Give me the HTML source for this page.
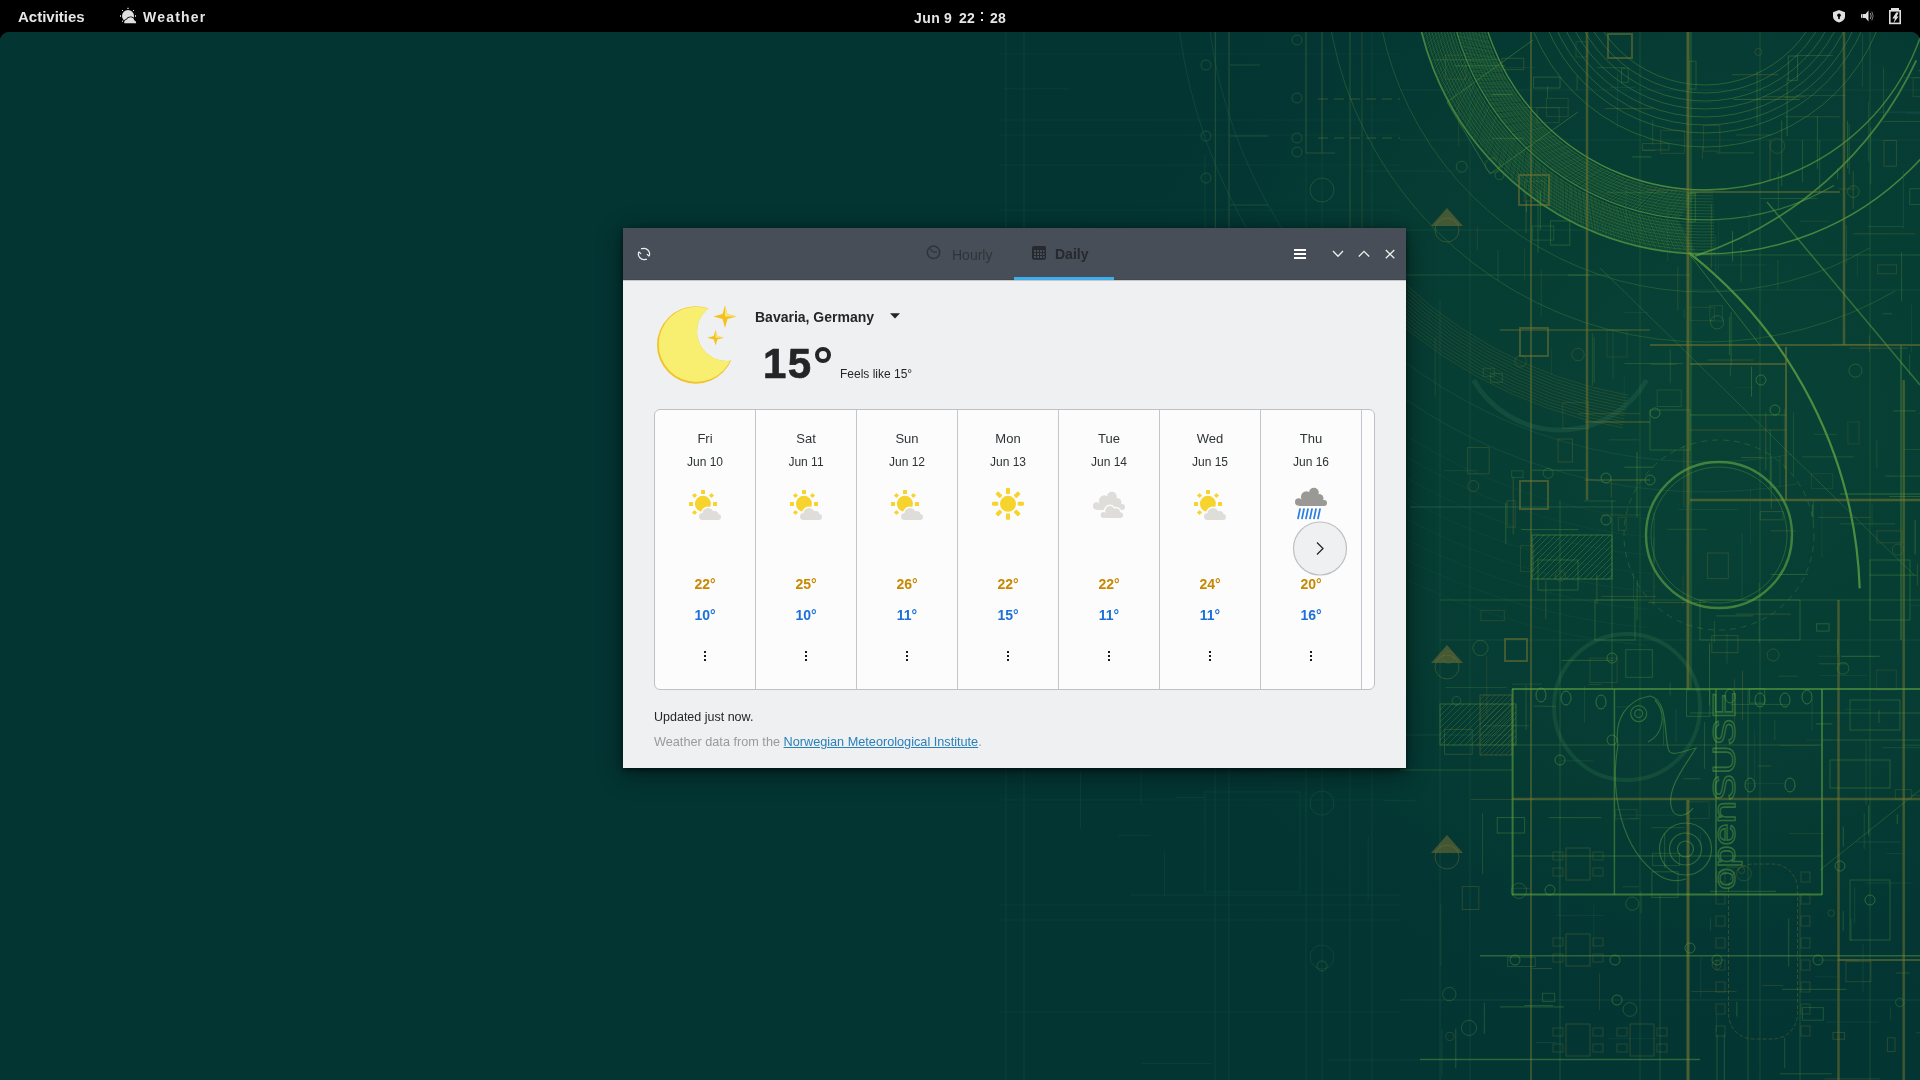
<!DOCTYPE html>
<html><head><meta charset="utf-8">
<style>
html,body{margin:0;padding:0;width:1920px;height:1080px;overflow:hidden;background:#000;font-family:"Liberation Sans",sans-serif;}
.abs{position:absolute;}
#topbar{position:absolute;left:0;top:0;width:1920px;height:32px;background:#000;color:#e6e6e6;font-weight:700;font-size:14px;}
#desk{position:absolute;left:0;top:32px;width:1920px;height:1048px;background:#033533;border-radius:9px 9px 0 0;overflow:hidden;}
#desk svg{position:absolute;left:0;top:0;}
#win{position:absolute;left:623px;top:228px;width:783px;height:540px;background:#eff0f2;box-shadow:0 2px 5px rgba(0,0,0,0.55),0 5px 24px rgba(0,0,0,0.45);}
#hdr{position:absolute;left:0;top:0;width:783px;height:52px;background:#474e57;}
.t{position:absolute;white-space:pre;line-height:1;will-change:transform;}
.frame{position:absolute;left:31px;top:181px;width:719px;height:279px;border:1px solid #c0c1c4;border-radius:6px;background:#fcfcfc;overflow:hidden;}
.sep{position:absolute;top:0;width:1px;height:279px;background:#c4c5c8;}
.day{will-change:transform;position:absolute;font-size:13px;color:#2e3436;text-align:center;width:100px;line-height:1;white-space:pre;}
.date{will-change:transform;position:absolute;font-size:12px;color:#2e3436;text-align:center;width:100px;line-height:1;white-space:pre;}
.hi{will-change:transform;position:absolute;font-size:14px;font-weight:700;color:#c88800;text-align:center;width:100px;line-height:1;}
.lo{will-change:transform;position:absolute;font-size:14px;font-weight:700;color:#1c71d8;text-align:center;width:100px;line-height:1;}
.dot{position:absolute;width:2px;height:2px;background:#1a1a1a;}
.icw{position:absolute;width:719px;height:60px;}
.ic{position:absolute;overflow:visible;}
</style></head><body>
<div id="desk"><svg width="1920" height="1048" viewBox="0 32 1920 1048"><defs><radialGradient id="glow" cx="1720" cy="420" r="700" gradientUnits="userSpaceOnUse"><stop offset="0" stop-color="#0c4b36" stop-opacity="0.6"/><stop offset="0.55" stop-color="#0a4634" stop-opacity="0.4"/><stop offset="1" stop-color="#033533" stop-opacity="0"/></radialGradient></defs><rect x="0" y="32" width="1920" height="1048" fill="#033533"/><rect x="900" y="32" width="1020" height="1048" fill="url(#glow)"/><line x1="1006.0" y1="32.0" x2="1006.0" y2="1080.0" stroke="#2f6e52" stroke-width="1" stroke-opacity="0.22"/><line x1="1024.0" y1="32.0" x2="1024.0" y2="1080.0" stroke="#2f6e52" stroke-width="1" stroke-opacity="0.22"/><line x1="1215.0" y1="32.0" x2="1215.0" y2="1080.0" stroke="#2f6e52" stroke-width="1" stroke-opacity="0.22"/><line x1="1229.0" y1="32.0" x2="1229.0" y2="1080.0" stroke="#2f6e52" stroke-width="1" stroke-opacity="0.22"/><line x1="1306.0" y1="32.0" x2="1306.0" y2="1080.0" stroke="#2f6e52" stroke-width="1" stroke-opacity="0.22"/><line x1="1322.0" y1="32.0" x2="1322.0" y2="1080.0" stroke="#2f6e52" stroke-width="1" stroke-opacity="0.22"/><line x1="1350.0" y1="32.0" x2="1350.0" y2="1080.0" stroke="#2f6e52" stroke-width="1" stroke-opacity="0.22"/><line x1="1372.0" y1="32.0" x2="1372.0" y2="1080.0" stroke="#2f6e52" stroke-width="1" stroke-opacity="0.22"/><line x1="1000.0" y1="54.0" x2="1400.0" y2="54.0" stroke="#2f6e52" stroke-width="1" stroke-opacity="0.15"/><line x1="1000.0" y1="120.0" x2="1400.0" y2="120.0" stroke="#2f6e52" stroke-width="1" stroke-opacity="0.15"/><line x1="1000.0" y1="135.0" x2="1400.0" y2="135.0" stroke="#2f6e52" stroke-width="1" stroke-opacity="0.15"/><line x1="1000.0" y1="165.0" x2="1400.0" y2="165.0" stroke="#2f6e52" stroke-width="1" stroke-opacity="0.15"/><line x1="1000.0" y1="210.0" x2="1400.0" y2="210.0" stroke="#2f6e52" stroke-width="1" stroke-opacity="0.15"/><line x1="1000.0" y1="300.0" x2="1400.0" y2="300.0" stroke="#2f6e52" stroke-width="1" stroke-opacity="0.15"/><line x1="1000.0" y1="380.0" x2="1400.0" y2="380.0" stroke="#2f6e52" stroke-width="1" stroke-opacity="0.15"/><line x1="1000.0" y1="460.0" x2="1400.0" y2="460.0" stroke="#2f6e52" stroke-width="1" stroke-opacity="0.15"/><line x1="1000.0" y1="507.0" x2="1400.0" y2="507.0" stroke="#2f6e52" stroke-width="1" stroke-opacity="0.15"/><line x1="1000.0" y1="560.0" x2="1400.0" y2="560.0" stroke="#2f6e52" stroke-width="1" stroke-opacity="0.15"/><line x1="1000.0" y1="700.0" x2="1400.0" y2="700.0" stroke="#2f6e52" stroke-width="1" stroke-opacity="0.15"/><line x1="1000.0" y1="800.0" x2="1400.0" y2="800.0" stroke="#2f6e52" stroke-width="1" stroke-opacity="0.15"/><line x1="1000.0" y1="905.0" x2="1400.0" y2="905.0" stroke="#2f6e52" stroke-width="1" stroke-opacity="0.15"/><line x1="1000.0" y1="920.0" x2="1400.0" y2="920.0" stroke="#2f6e52" stroke-width="1" stroke-opacity="0.15"/><line x1="1000.0" y1="1012.0" x2="1400.0" y2="1012.0" stroke="#2f6e52" stroke-width="1" stroke-opacity="0.15"/><circle cx="1206" cy="65" r="5" fill="none" stroke="#5b8f3d" stroke-width="1" stroke-opacity="0.3"/><circle cx="1206" cy="136" r="5" fill="none" stroke="#5b8f3d" stroke-width="1" stroke-opacity="0.3"/><circle cx="1206" cy="178" r="5" fill="none" stroke="#5b8f3d" stroke-width="1" stroke-opacity="0.3"/><circle cx="1297" cy="40" r="5" fill="none" stroke="#5b8f3d" stroke-width="1" stroke-opacity="0.3"/><circle cx="1297" cy="98" r="5" fill="none" stroke="#5b8f3d" stroke-width="1" stroke-opacity="0.3"/><circle cx="1297" cy="138" r="5" fill="none" stroke="#5b8f3d" stroke-width="1" stroke-opacity="0.3"/><circle cx="1297" cy="152" r="5" fill="none" stroke="#5b8f3d" stroke-width="1" stroke-opacity="0.3"/><circle cx="1322" cy="966" r="5" fill="none" stroke="#5b8f3d" stroke-width="1" stroke-opacity="0.3"/><circle cx="1322" cy="190" r="12" fill="none" stroke="#5b8f3d" stroke-width="1" stroke-opacity="0.3"/><circle cx="1322" cy="803" r="12" fill="none" stroke="#3e7a48" stroke-width="1" stroke-opacity="0.22"/><circle cx="1322" cy="957" r="12" fill="none" stroke="#3e7a48" stroke-width="1" stroke-opacity="0.22"/><rect x="1205.0" y="792.0" width="95.0" height="100.0" rx="0" fill="none" stroke="#2f6e52" stroke-width="1" stroke-opacity="0.18"/><line x1="1130.0" y1="895.0" x2="1400.0" y2="895.0" stroke="#2f6e52" stroke-width="1" stroke-opacity="0.18"/><path d="M1656.2 519.9 A560 560 0 0 1 1220.0 242.0" fill="none" stroke="#2f6e52" stroke-width="1" stroke-opacity="0.15"/><path d="M1654.6 537.8 A578 578 0 0 1 1204.4 251.0" fill="none" stroke="#2f6e52" stroke-width="1" stroke-opacity="0.15"/><path d="M1653.1 555.7 A596 596 0 0 1 1188.8 260.0" fill="none" stroke="#2f6e52" stroke-width="1" stroke-opacity="0.15"/><path d="M1651.5 573.7 A614 614 0 0 1 1173.3 269.0" fill="none" stroke="#2f6e52" stroke-width="1" stroke-opacity="0.15"/><path d="M1649.9 591.6 A632 632 0 0 1 1157.7 278.0" fill="none" stroke="#2f6e52" stroke-width="1" stroke-opacity="0.15"/><path d="M1648.3 609.5 A650 650 0 0 1 1142.1 287.0" fill="none" stroke="#2f6e52" stroke-width="1" stroke-opacity="0.15"/><path d="M1646.8 627.5 A668 668 0 0 1 1126.5 296.0" fill="none" stroke="#2f6e52" stroke-width="1" stroke-opacity="0.15"/><path d="M1645.2 645.4 A686 686 0 0 1 1110.9 305.0" fill="none" stroke="#2f6e52" stroke-width="1" stroke-opacity="0.15"/><line x1="1306.0" y1="32.0" x2="1306.0" y2="153.0" stroke="#6d7a35" stroke-width="1" stroke-opacity="0.35"/><line x1="1322.0" y1="32.0" x2="1322.0" y2="153.0" stroke="#6d7a35" stroke-width="1" stroke-opacity="0.35"/><line x1="1350.0" y1="32.0" x2="1350.0" y2="230.0" stroke="#6d7a35" stroke-width="1" stroke-opacity="0.3"/><line x1="1362.0" y1="32.0" x2="1362.0" y2="230.0" stroke="#6d7a35" stroke-width="1" stroke-opacity="0.3"/><line x1="1215.6" y1="32.0" x2="1215.6" y2="230.0" stroke="#6d7a35" stroke-width="1" stroke-opacity="0.28"/><line x1="1229.0" y1="32.0" x2="1229.0" y2="230.0" stroke="#6d7a35" stroke-width="1" stroke-opacity="0.28"/><line x1="1306.0" y1="153.0" x2="1335.0" y2="153.0" stroke="#6d7a35" stroke-width="1" stroke-opacity="0.35"/><line x1="1318.0" y1="99.0" x2="1400.0" y2="99.0" stroke="#6d7a35" stroke-width="1.5" stroke-opacity="0.3" stroke-dasharray="10 6"/><line x1="1318.0" y1="138.0" x2="1400.0" y2="138.0" stroke="#6d7a35" stroke-width="1.5" stroke-opacity="0.3" stroke-dasharray="10 6"/><line x1="1230.0" y1="65.0" x2="1260.0" y2="65.0" stroke="#5b8f3d" stroke-width="1" stroke-opacity="0.3"/><line x1="1230.0" y1="136.0" x2="1268.0" y2="136.0" stroke="#5b8f3d" stroke-width="1" stroke-opacity="0.3"/><line x1="1230.0" y1="205.0" x2="1268.0" y2="205.0" stroke="#5b8f3d" stroke-width="1" stroke-opacity="0.3"/><path d="M1828.0 -38.0 A123 123 0 0 1 1582.0 -38.0" fill="none" stroke="#5ea33f" stroke-width="0.9" stroke-opacity="0.42"/><path d="M1836.0 -38.0 A131 131 0 0 1 1574.0 -38.0" fill="none" stroke="#5ea33f" stroke-width="0.9" stroke-opacity="0.42"/><path d="M1844.0 -38.0 A139 139 0 0 1 1566.0 -38.0" fill="none" stroke="#5ea33f" stroke-width="0.9" stroke-opacity="0.42"/><path d="M1852.0 -38.0 A147 147 0 0 1 1558.0 -38.0" fill="none" stroke="#5ea33f" stroke-width="0.9" stroke-opacity="0.42"/><path d="M1860.0 -38.0 A155 155 0 0 1 1550.0 -38.0" fill="none" stroke="#5ea33f" stroke-width="0.9" stroke-opacity="0.42"/><path d="M1868.0 -38.0 A163 163 0 0 1 1542.0 -38.0" fill="none" stroke="#5ea33f" stroke-width="0.9" stroke-opacity="0.42"/><path d="M1876.0 -38.0 A171 171 0 0 1 1534.0 -38.0" fill="none" stroke="#5ea33f" stroke-width="0.9" stroke-opacity="0.42"/><path d="M1890.0 -38.0 A185 185 0 0 1 1520.0 -38.0" fill="none" stroke="#5ea33f" stroke-width="0.9" stroke-opacity="0.42"/><path d="M1713.0 189.9 A228 228 0 0 1 1477.1 -30.0" fill="none" stroke="#6aab44" stroke-width="0.8" stroke-opacity="0.3"/><path d="M1713.1 192.9 A231 231 0 0 1 1474.1 -29.9" fill="none" stroke="#6aab44" stroke-width="0.8" stroke-opacity="0.3"/><path d="M1713.2 195.9 A234 234 0 0 1 1471.1 -29.8" fill="none" stroke="#6aab44" stroke-width="0.8" stroke-opacity="0.3"/><path d="M1713.3 198.9 A237 237 0 0 1 1468.1 -29.7" fill="none" stroke="#6aab44" stroke-width="0.8" stroke-opacity="0.3"/><path d="M1713.4 201.9 A240 240 0 0 1 1465.1 -29.6" fill="none" stroke="#6aab44" stroke-width="0.8" stroke-opacity="0.3"/><path d="M1713.5 204.9 A243 243 0 0 1 1462.1 -29.5" fill="none" stroke="#6aab44" stroke-width="0.8" stroke-opacity="0.3"/><path d="M1713.6 207.9 A246 246 0 0 1 1459.1 -29.4" fill="none" stroke="#6aab44" stroke-width="0.8" stroke-opacity="0.3"/><path d="M1713.7 210.8 A249 249 0 0 1 1456.2 -29.3" fill="none" stroke="#6aab44" stroke-width="0.8" stroke-opacity="0.3"/><path d="M1713.8 213.8 A252 252 0 0 1 1453.2 -29.2" fill="none" stroke="#6aab44" stroke-width="0.8" stroke-opacity="0.3"/><path d="M1713.9 216.8 A255 255 0 0 1 1450.2 -29.1" fill="none" stroke="#6aab44" stroke-width="0.8" stroke-opacity="0.3"/><path d="M1714.0 219.8 A258 258 0 0 1 1447.2 -29.0" fill="none" stroke="#6aab44" stroke-width="0.8" stroke-opacity="0.3"/><path d="M1714.1 222.8 A261 261 0 0 1 1444.2 -28.9" fill="none" stroke="#6aab44" stroke-width="0.8" stroke-opacity="0.3"/><path d="M1714.2 225.8 A264 264 0 0 1 1441.2 -28.8" fill="none" stroke="#6aab44" stroke-width="0.8" stroke-opacity="0.3"/><path d="M1714.3 228.8 A267 267 0 0 1 1438.2 -28.7" fill="none" stroke="#6aab44" stroke-width="0.8" stroke-opacity="0.3"/><path d="M1714.4 231.8 A270 270 0 0 1 1435.2 -28.6" fill="none" stroke="#6aab44" stroke-width="0.8" stroke-opacity="0.3"/><path d="M1714.5 234.8 A273 273 0 0 1 1432.2 -28.5" fill="none" stroke="#6aab44" stroke-width="0.8" stroke-opacity="0.3"/><path d="M1714.6 237.8 A276 276 0 0 1 1429.2 -28.4" fill="none" stroke="#6aab44" stroke-width="0.8" stroke-opacity="0.3"/><path d="M1714.7 240.8 A279 279 0 0 1 1426.2 -28.3" fill="none" stroke="#6aab44" stroke-width="0.8" stroke-opacity="0.3"/><path d="M1714.8 243.8 A282 282 0 0 1 1423.2 -28.2" fill="none" stroke="#6aab44" stroke-width="0.8" stroke-opacity="0.3"/><path d="M1714.9 246.8 A285 285 0 0 1 1420.2 -28.1" fill="none" stroke="#6aab44" stroke-width="0.8" stroke-opacity="0.3"/><path d="M1715.1 249.8 A288 288 0 0 1 1417.2 -27.9" fill="none" stroke="#6aab44" stroke-width="0.8" stroke-opacity="0.3"/><path d="M1715.2 252.8 A291 291 0 0 1 1414.2 -27.8" fill="none" stroke="#6aab44" stroke-width="0.8" stroke-opacity="0.3"/><path d="M1933.0 -38.0 A228 228 0 0 1 1477.0 -38.0" fill="none" stroke="#6aab44" stroke-width="1.4" stroke-opacity="0.6"/><path d="M1997.0 -38.0 A292 292 0 0 1 1413.0 -38.0" fill="none" stroke="#6aab44" stroke-width="1.6" stroke-opacity="0.65"/><path d="M1834.0 185.4 A258 258 0 0 1 1447.2 -29.0" fill="none" stroke="#6aab44" stroke-width="1.2" stroke-opacity="0.5"/><path d="M1697 192L1678 219M1678 221L1695 252M1696 192L1677 218M1676 220L1693 252M1694 192L1675 218M1675 220L1692 252M1693 192L1674 218M1673 220L1690 252M1692 192L1672 218M1672 220L1688 252M1690 192L1671 218M1670 220L1686 251M1689 191L1669 217M1669 219L1685 251M1688 191L1668 217M1667 219L1683 251M1686 191L1666 217M1666 219L1681 251M1685 191L1665 217M1664 219L1680 251M1684 191L1663 217M1663 219L1678 251M1682 191L1662 216M1661 218L1676 251M1681 191L1660 216M1660 218L1675 250M1680 191L1659 216M1658 218L1673 250M1678 190L1657 216M1657 218L1671 250M1677 190L1656 215M1655 217L1670 250M1676 190L1654 215M1654 217L1668 250M1674 190L1653 215M1652 217L1666 249M1673 190L1651 214M1651 216L1665 249M1672 190L1650 214M1649 216L1663 249M1670 189L1648 214M1648 216L1661 249M1669 189L1647 213M1647 215L1660 248M1668 189L1646 213M1645 215L1658 248M1666 189L1644 213M1644 215L1656 248M1665 189L1643 212M1642 214L1655 248M1664 188L1641 212M1641 214L1653 247M1662 188L1640 212M1639 214L1651 247M1661 188L1638 211M1638 213L1650 247M1660 188L1637 211M1636 213L1648 246M1658 187L1635 210M1635 212L1646 246M1657 187L1634 210M1633 212L1645 246M1656 187L1632 210M1632 212L1643 245M1655 186L1631 209M1630 211L1641 245M1653 186L1630 209M1629 211L1640 245M1652 186L1628 208M1628 210L1638 244M1651 185L1627 208M1626 210L1636 244M1649 185L1625 207M1625 209L1635 243M1648 185L1624 207M1623 209L1633 243M1647 185L1622 206M1622 208L1632 243M1645 184L1621 206M1620 208L1630 242M1644 184L1620 205M1619 207L1628 242M1643 183L1618 205M1617 207L1627 241M1642 183L1617 204M1616 206L1625 241M1640 183L1615 204M1615 206L1623 240M1639 182L1614 203M1613 205L1622 240M1638 182L1613 203M1612 205L1620 239M1636 182L1611 202M1610 204L1619 239M1635 181L1610 202M1609 204L1617 238M1634 181L1608 201M1608 203L1615 238M1633 180L1607 201M1606 202L1614 237M1631 180L1606 200M1605 202L1612 237M1630 179L1604 199M1603 201L1611 236M1629 179L1603 199M1602 201L1609 236M1628 179L1601 198M1601 200L1607 235M1626 178L1600 198M1599 200L1606 235M1625 178L1599 197M1598 199L1604 234M1624 177L1597 196M1596 198L1603 233M1623 177L1596 196M1595 198L1601 233M1621 176L1595 195M1594 197L1599 232M1620 176L1593 195M1592 196L1598 232M1619 175L1592 194M1591 196L1596 231M1618 175L1591 193M1590 195L1595 230M1616 174L1589 193M1588 194L1593 230M1615 174L1588 192M1587 194L1592 229M1614 173L1587 191M1586 193L1590 228M1613 173L1585 191M1584 192L1589 228M1611 172L1584 190M1583 192L1587 227M1610 172L1583 189M1582 191L1586 226M1609 171L1581 188M1580 190L1584 226M1608 170L1580 188M1579 189L1582 225M1607 170L1579 187M1578 189L1581 224M1605 169L1577 186M1576 188L1579 223M1604 169L1576 185M1575 187L1578 223M1603 168L1575 185M1574 186L1576 222M1602 168L1573 184M1572 186L1575 221M1601 167L1572 183M1571 185L1573 220M1599 166L1571 182M1570 184L1572 220M1598 166L1570 182M1569 183L1570 219M1597 165L1568 181M1567 182L1569 218M1596 164L1567 180M1566 182L1567 217M1595 164L1566 179M1565 181L1566 216M1593 163L1564 178M1563 180L1564 216M1592 163L1563 178M1562 179L1563 215M1591 162L1562 177M1561 178L1561 214M1590 161L1561 176M1560 178L1560 213M1589 161L1559 175M1558 177L1559 212M1588 160L1558 174M1557 176L1557 211M1587 159L1557 173M1556 175L1556 211M1585 158L1556 172M1555 174L1554 210M1584 158L1555 172M1553 173L1553 209M1583 157L1553 171M1552 172L1551 208M1582 156L1552 170M1551 171L1550 207M1581 156L1551 169M1550 171L1548 206M1580 155L1550 168M1549 170L1547 205M1579 154L1549 167M1547 169L1546 204M1577 153L1547 166M1546 168L1544 203M1576 153L1546 165M1545 167L1543 202M1575 152L1545 164M1544 166L1541 201M1574 151L1544 163M1543 165L1540 201M1573 150L1543 163M1541 164L1539 200M1572 150L1541 162M1540 163L1537 199M1571 149L1540 161M1539 162L1536 198M1570 148L1539 160M1538 161L1535 197M1569 147L1538 159M1537 160L1533 196M1568 146L1537 158M1536 159L1532 195M1567 146L1536 157M1534 158L1530 194M1566 145L1535 156M1533 157L1529 193M1564 144L1533 155M1532 156L1528 192M1563 143L1532 154M1531 155L1526 191M1562 142L1531 153M1530 154L1525 189M1561 142L1530 152M1529 153L1524 188M1560 141L1529 151M1528 152L1522 187M1559 140L1528 150M1527 151L1521 186M1558 139L1527 149M1525 150L1520 185M1557 138L1526 148M1524 149L1519 184M1556 137L1525 147M1523 148L1517 183M1555 136L1524 145M1522 147L1516 182M1554 136L1523 144M1521 146L1515 181M1553 135L1522 143M1520 145L1513 180M1552 134L1520 142M1519 144L1512 179M1551 133L1519 141M1518 143L1511 178M1550 132L1518 140M1517 142L1510 176M1549 131L1517 139M1516 140L1508 175M1548 130L1516 138M1515 139L1507 174M1547 129L1515 137M1514 138L1506 173M1546 128L1514 136M1513 137L1505 172M1545 127L1513 135M1512 136L1504 171M1544 127L1512 134M1511 135L1502 169M1543 126L1511 132M1510 134L1501 168M1542 125L1510 131M1509 133L1500 167M1541 124L1509 130M1508 131L1499 166M1540 123L1508 129M1507 130L1498 165M1540 122L1507 128M1506 129L1496 163M1539 121L1506 127M1505 128L1495 162M1538 120L1505 126M1504 127L1494 161M1537 119L1504 124M1503 126L1493 160M1536 118L1504 123M1502 124L1492 159M1535 117L1503 122M1501 123L1491 157M1534 116L1502 121M1500 122L1489 156M1533 115L1501 120M1499 121L1488 155M1532 114L1500 118M1498 120L1487 154M1531 113L1499 117M1497 118L1486 152M1531 112L1498 116M1496 117L1485 151M1530 111L1497 115M1496 116L1484 150M1529 110L1496 114M1495 115L1483 148M1528 109L1495 112M1494 114L1482 147M1527 108L1495 111M1493 112L1481 146M1526 107L1494 110M1492 111L1480 145M1525 106L1493 109M1491 110L1479 143M1525 105L1492 108M1490 109L1478 142M1524 104L1491 106M1489 107L1476 141M1523 103L1490 105M1489 106L1475 139M1522 101L1489 104M1488 105L1474 138M1521 100L1489 103M1487 104L1473 137M1521 99L1488 101M1486 102L1472 135M1520 98L1487 100M1485 101L1471 134M1519 97L1486 99M1485 100L1470 132M1518 96L1485 97M1484 98L1469 131M1517 95L1485 96M1483 97L1468 130M1517 94L1484 95M1482 96L1467 128M1516 93L1483 94M1481 95L1466 127M1515 92L1482 92M1481 93L1466 126M1514 91L1482 91M1480 92L1465 124M1514 90L1481 90M1479 91L1464 123M1513 88L1480 88M1478 89L1463 121M1512 87L1479 87M1478 88L1462 120M1511 86L1479 86M1477 87L1461 119M1511 85L1478 84M1476 85L1460 117M1510 84L1477 83M1475 84L1459 116M1509 83L1476 82M1475 83L1458 114M1509 82L1476 80M1474 81L1457 113M1508 80L1475 79M1473 80L1456 111M1507 79L1474 78M1473 79L1456 110M1506 78L1474 76M1472 77L1455 108M1506 77L1473 75M1471 76L1454 107M1505 76L1472 74M1471 75L1453 106M1504 75L1472 72M1470 73L1452 104M1504 74L1471 71M1469 72L1451 103M1503 72L1471 70M1469 71L1451 101M1503 71L1470 68M1468 69L1450 100M1502 70L1469 67M1467 68L1449 98M1501 69L1469 66M1467 66L1448 97M1501 68L1468 64M1466 65L1447 95M1500 66L1468 63M1466 64L1447 94M1499 65L1467 61M1465 62L1446 92M1499 64L1466 60M1465 61L1445 91M1498 63L1466 59M1464 59L1444 89M1498 62L1465 57M1463 58L1444 88M1497 60L1465 56M1463 57L1443 86M1497 59L1464 54M1462 55L1442 85M1496 58L1464 53M1462 54L1441 83M1495 57L1463 52M1461 52L1441 81M1495 56L1463 50M1461 51L1440 80M1494 54L1462 49M1460 50L1439 78M1494 53L1462 47M1460 48L1439 77M1493 52L1461 46M1459 47L1438 75M1493 51L1461 45M1459 45L1437 74M1492 49L1460 43M1458 44L1437 72M1492 48L1460 42M1458 42L1436 71M1491 47L1459 40M1457 41L1435 69M1491 46L1459 39M1457 39L1435 68M1490 44L1458 37M1456 38L1434 66M1490 43L1458 36M1456 37L1434 64M1489 42L1457 35M1455 35L1433 63M1489 41L1457 33M1455 34L1432 61M1488 39L1457 32M1455 32L1432 60M1488 38L1456 30M1454 31L1431 58M1488 37L1456 29M1454 29L1431 56M1487 36L1455 27M1453 28L1430 55M1487 34L1455 26M1453 26L1430 53M1486 33L1455 24M1453 25L1429 52M1486 32L1454 23M1452 23L1429 50M1485 31L1454 21M1452 22L1428 48M1485 29L1454 20M1452 20L1428 47M1485 28L1453 19M1451 19L1427 45M1484 27L1453 17M1451 18L1427 44M1484 25L1453 16M1451 16L1426 42M1484 24L1452 14M1450 15L1426 40M1483 23L1452 13M1450 13L1425 39M1483 22L1452 11M1450 12L1425 37M1482 20L1451 10M1449 10L1424 35M1482 19L1451 8M1449 9L1424 34M1482 18L1451 7M1449 7L1424 32M1482 16L1451 5M1449 6L1423 31M1481 15L1450 4M1448 4L1423 29M1481 14L1450 2M1448 3L1422 27M1481 12L1450 1M1448 1L1422 26M1480 11L1450 -1M1448 -0L1422 24M1480 10L1450 -2M1448 -2L1421 22M1480 9L1449 -4M1447 -3L1421 21M1479 7L1449 -5M1447 -5L1421 19M1479 6L1449 -7M1447 -6L1420 17M1479 5L1449 -8M1447 -8L1420 16M1479 3L1449 -10M1447 -9L1420 14M1478 2L1448 -11M1446 -11L1419 12M1478 1L1448 -13M1446 -12L1419 11M1478 -1L1448 -14M1446 -14L1419 9M1478 -2L1448 -16M1446 -15L1419 7M1478 -3L1448 -17M1446 -17L1418 6M1477 -5L1448 -19M1446 -18L1418 4M1477 -6L1448 -20M1446 -20L1418 2M1477 -7L1448 -22M1446 -21L1418 1M1477 -9L1447 -23M1445 -23L1417 -1M1477 -10L1447 -24M1445 -24L1417 -3M1477 -11L1447 -26M1445 -26L1417 -4M1476 -13L1447 -27M1445 -27L1417 -6M1476 -14L1447 -29M1445 -29L1417 -8M1476 -15L1447 -30M1445 -30L1416 -9M1476 -17L1447 -32M1445 -32L1416 -11M1476 -18L1447 -33M1445 -33L1416 -13M1476 -19L1447 -35M1445 -35L1416 -14M1476 -21L1447 -36M1445 -36L1416 -16M1476 -22L1447 -38M1445 -38L1416 -18M1475 -23L1447 -40M1445 -40L1416 -19M1475 -25L1447 -41M1445 -41L1415 -21M1475 -26L1447 -43M1445 -43L1415 -23M1475 -27L1447 -44M1445 -44L1415 -25M1475 -29L1447 -46M1445 -46L1415 -26" stroke="#6aab44" stroke-width="0.6" stroke-opacity="0.3" fill="none"/><path d="M1870.0 247.8 A330 330 0 0 1 1375.0 -38.0" fill="none" stroke="#5ea33f" stroke-width="1" stroke-opacity="0.28"/><path d="M1895.0 291.1 A380 380 0 0 1 1325.0 -38.0" fill="none" stroke="#5ea33f" stroke-width="1" stroke-opacity="0.28"/><path d="M1628.6 395.3 A440 440 0 0 1 1378.0 256.4" fill="none" stroke="#7b7830" stroke-width="0.8" stroke-opacity="0.3"/><path d="M1628.1 398.3 A443 443 0 0 1 1375.8 258.4" fill="none" stroke="#7b7830" stroke-width="0.8" stroke-opacity="0.3"/><path d="M1627.6 401.2 A446 446 0 0 1 1373.6 260.4" fill="none" stroke="#7b7830" stroke-width="0.8" stroke-opacity="0.3"/><path d="M1627.0 404.2 A449 449 0 0 1 1371.3 262.4" fill="none" stroke="#7b7830" stroke-width="0.8" stroke-opacity="0.3"/><path d="M1626.5 407.1 A452 452 0 0 1 1369.1 264.4" fill="none" stroke="#7b7830" stroke-width="0.8" stroke-opacity="0.3"/><path d="M1626.0 410.1 A455 455 0 0 1 1366.9 266.5" fill="none" stroke="#7b7830" stroke-width="0.8" stroke-opacity="0.3"/><path d="M1625.5 413.0 A458 458 0 0 1 1364.6 268.5" fill="none" stroke="#7b7830" stroke-width="0.8" stroke-opacity="0.3"/><path d="M1624.9 416.0 A461 461 0 0 1 1362.4 270.5" fill="none" stroke="#7b7830" stroke-width="0.8" stroke-opacity="0.3"/><path d="M1624.4 419.0 A464 464 0 0 1 1360.2 272.5" fill="none" stroke="#7b7830" stroke-width="0.8" stroke-opacity="0.3"/><path d="M1623.9 421.9 A467 467 0 0 1 1358.0 274.5" fill="none" stroke="#7b7830" stroke-width="0.8" stroke-opacity="0.3"/><path d="M1623.4 424.9 A470 470 0 0 1 1355.7 276.5" fill="none" stroke="#7b7830" stroke-width="0.8" stroke-opacity="0.3"/><path d="M1622.9 427.8 A473 473 0 0 1 1353.5 278.5" fill="none" stroke="#7b7830" stroke-width="0.8" stroke-opacity="0.3"/><path d="M1791.8 454.4 A500 500 0 0 1 1206.9 5.6" fill="none" stroke="#2f6e52" stroke-width="1" stroke-opacity="0.3"/><path d="M1797.0 483.9 A530 530 0 0 1 1177.0 8.2" fill="none" stroke="#2f6e52" stroke-width="1" stroke-opacity="0.3"/><path d="M1688.6 252.5 A446 446 0 0 1 1859.7 588.4" fill="none" stroke="#6aae46" stroke-width="2.2" stroke-opacity="0.7"/><path d="M1916.3 60.4 A370 370 0 0 1 1695.3 255.9" fill="none" stroke="#6aae46" stroke-width="1.8" stroke-opacity="0.6"/><path d="M1646.6 380.0 A100 100 0 0 1 1473.4 380.0" fill="none" stroke="#2f6e52" stroke-width="5" stroke-opacity="0.3"/><circle cx="1627" cy="707" r="73" fill="none" stroke="#3f8a50" stroke-width="4" stroke-opacity="0.22"/><line x1="1688.0" y1="32.0" x2="1688.0" y2="689.0" stroke="#7b7830" stroke-width="3" stroke-opacity="0.6"/><line x1="1691.0" y1="32.0" x2="1691.0" y2="689.0" stroke="#5ea33f" stroke-width="1" stroke-opacity="0.4"/><line x1="1688.0" y1="800.0" x2="1688.0" y2="1080.0" stroke="#7b7830" stroke-width="3" stroke-opacity="0.6"/><line x1="1844.0" y1="32.0" x2="1844.0" y2="345.0" stroke="#7b7830" stroke-width="2.5" stroke-opacity="0.5"/><line x1="1903.7" y1="380.0" x2="1903.7" y2="1080.0" stroke="#7b7830" stroke-width="2.5" stroke-opacity="0.5"/><line x1="1786.0" y1="347.0" x2="1786.0" y2="500.0" stroke="#7b7830" stroke-width="2" stroke-opacity="0.55"/><line x1="1587.0" y1="32.0" x2="1587.0" y2="500.0" stroke="#7b7830" stroke-width="2.5" stroke-opacity="0.5"/><line x1="1531.0" y1="32.0" x2="1531.0" y2="1080.0" stroke="#7b7830" stroke-width="2" stroke-opacity="0.45"/><line x1="1512.6" y1="689.0" x2="1512.6" y2="895.0" stroke="#5ea33f" stroke-width="2" stroke-opacity="0.6"/><line x1="1614.4" y1="689.0" x2="1614.4" y2="895.0" stroke="#5ea33f" stroke-width="1.5" stroke-opacity="0.5"/><line x1="1716.0" y1="689.0" x2="1716.0" y2="895.0" stroke="#5ea33f" stroke-width="1.5" stroke-opacity="0.5"/><line x1="1822.0" y1="689.0" x2="1822.0" y2="895.0" stroke="#5ea33f" stroke-width="2" stroke-opacity="0.55"/><line x1="1838.5" y1="600.0" x2="1838.5" y2="1080.0" stroke="#7b7830" stroke-width="2.5" stroke-opacity="0.5"/><line x1="1440.0" y1="300.0" x2="1440.0" y2="1080.0" stroke="#2f6e52" stroke-width="1" stroke-opacity="0.3"/><line x1="1470.0" y1="32.0" x2="1470.0" y2="1080.0" stroke="#2f6e52" stroke-width="1" stroke-opacity="0.25"/><line x1="1760.0" y1="32.0" x2="1760.0" y2="1080.0" stroke="#5ea33f" stroke-width="1" stroke-opacity="0.22"/><line x1="1870.0" y1="32.0" x2="1870.0" y2="1080.0" stroke="#5ea33f" stroke-width="1" stroke-opacity="0.22"/><line x1="1640.0" y1="32.0" x2="1640.0" y2="1080.0" stroke="#5ea33f" stroke-width="1" stroke-opacity="0.2"/><line x1="1748.0" y1="689.0" x2="1748.0" y2="1080.0" stroke="#5ea33f" stroke-width="1" stroke-opacity="0.3"/><line x1="1560.0" y1="500.0" x2="1560.0" y2="1080.0" stroke="#5ea33f" stroke-width="1" stroke-opacity="0.28"/><line x1="1901.0" y1="345.0" x2="1901.0" y2="640.0" stroke="#5ea33f" stroke-width="1.5" stroke-opacity="0.4"/><line x1="1612.0" y1="500.0" x2="1612.0" y2="689.0" stroke="#5ea33f" stroke-width="1" stroke-opacity="0.3"/><line x1="1660.0" y1="895.0" x2="1660.0" y2="1080.0" stroke="#5ea33f" stroke-width="1" stroke-opacity="0.3"/><line x1="1800.0" y1="895.0" x2="1800.0" y2="1080.0" stroke="#5ea33f" stroke-width="1" stroke-opacity="0.3"/><line x1="1650.0" y1="345.0" x2="1920.0" y2="345.0" stroke="#7b7830" stroke-width="2" stroke-opacity="0.5"/><line x1="1690.0" y1="364.0" x2="1786.0" y2="364.0" stroke="#7b7830" stroke-width="2" stroke-opacity="0.5"/><line x1="1690.0" y1="415.0" x2="1786.0" y2="415.0" stroke="#5ea33f" stroke-width="1" stroke-opacity="0.4"/><line x1="1690.0" y1="430.0" x2="1786.0" y2="430.0" stroke="#7b7830" stroke-width="1" stroke-opacity="0.4"/><line x1="1690.0" y1="500.0" x2="1920.0" y2="500.0" stroke="#7b7830" stroke-width="2.5" stroke-opacity="0.55"/><line x1="1840.0" y1="494.0" x2="1920.0" y2="494.0" stroke="#5ea33f" stroke-width="1" stroke-opacity="0.45"/><line x1="1690.0" y1="192.0" x2="1840.0" y2="192.0" stroke="#7b7830" stroke-width="2" stroke-opacity="0.45"/><line x1="1500.0" y1="330.0" x2="1650.0" y2="330.0" stroke="#7b7830" stroke-width="1.5" stroke-opacity="0.45"/><line x1="1585.0" y1="422.0" x2="1650.0" y2="422.0" stroke="#7b7830" stroke-width="1.5" stroke-opacity="0.45"/><line x1="1585.0" y1="480.0" x2="1650.0" y2="480.0" stroke="#7b7830" stroke-width="1.5" stroke-opacity="0.45"/><line x1="1410.0" y1="507.0" x2="1650.0" y2="507.0" stroke="#2f6e52" stroke-width="1.5" stroke-opacity="0.4"/><line x1="1512.0" y1="689.0" x2="1920.0" y2="689.0" stroke="#5ea33f" stroke-width="2" stroke-opacity="0.6"/><line x1="1512.0" y1="894.6" x2="1822.0" y2="894.6" stroke="#5ea33f" stroke-width="2" stroke-opacity="0.6"/><line x1="1512.0" y1="856.0" x2="1822.0" y2="856.0" stroke="#5ea33f" stroke-width="1" stroke-opacity="0.4"/><line x1="1512.0" y1="799.0" x2="1920.0" y2="799.0" stroke="#7b7830" stroke-width="2.5" stroke-opacity="0.5"/><line x1="1480.0" y1="955.7" x2="1920.0" y2="955.7" stroke="#5ea33f" stroke-width="1.5" stroke-opacity="0.45"/><line x1="1420.0" y1="1059.6" x2="1700.0" y2="1059.6" stroke="#5ea33f" stroke-width="1.5" stroke-opacity="0.45"/><line x1="1440.0" y1="600.0" x2="1920.0" y2="600.0" stroke="#5ea33f" stroke-width="1" stroke-opacity="0.28"/><line x1="1440.0" y1="640.0" x2="1920.0" y2="640.0" stroke="#2f6e52" stroke-width="1" stroke-opacity="0.3"/><line x1="1400.0" y1="770.0" x2="1512.0" y2="770.0" stroke="#5ea33f" stroke-width="1" stroke-opacity="0.3"/><line x1="1400.0" y1="735.0" x2="1512.0" y2="735.0" stroke="#2f6e52" stroke-width="1" stroke-opacity="0.3"/><line x1="1690.0" y1="713.0" x2="1920.0" y2="713.0" stroke="#5ea33f" stroke-width="1" stroke-opacity="0.33"/><line x1="1838.0" y1="960.0" x2="1920.0" y2="960.0" stroke="#7b7830" stroke-width="2" stroke-opacity="0.5"/><line x1="1400.0" y1="275.0" x2="1690.0" y2="275.0" stroke="#5ea33f" stroke-width="1" stroke-opacity="0.28"/><line x1="1400.0" y1="230.0" x2="1690.0" y2="230.0" stroke="#2f6e52" stroke-width="1" stroke-opacity="0.28"/><line x1="1690.0" y1="255.0" x2="1920.0" y2="255.0" stroke="#5ea33f" stroke-width="1" stroke-opacity="0.28"/><line x1="1690.0" y1="290.0" x2="1920.0" y2="290.0" stroke="#2f6e52" stroke-width="1" stroke-opacity="0.28"/><line x1="1400.0" y1="140.0" x2="1920.0" y2="140.0" stroke="#2f6e52" stroke-width="1" stroke-opacity="0.22"/><line x1="1400.0" y1="90.0" x2="1920.0" y2="90.0" stroke="#2f6e52" stroke-width="1" stroke-opacity="0.22"/><line x1="1512.0" y1="745.0" x2="1822.0" y2="745.0" stroke="#5ea33f" stroke-width="1" stroke-opacity="0.3"/><line x1="1822.0" y1="740.0" x2="1920.0" y2="740.0" stroke="#5ea33f" stroke-width="1" stroke-opacity="0.3"/><line x1="1400.0" y1="1000.0" x2="1920.0" y2="1000.0" stroke="#2f6e52" stroke-width="1" stroke-opacity="0.3"/><line x1="1767.0" y1="202.0" x2="1920.0" y2="385.0" stroke="#5ea33f" stroke-width="1.5" stroke-opacity="0.5"/><line x1="1690.0" y1="255.0" x2="1760.0" y2="345.0" stroke="#5ea33f" stroke-width="1" stroke-opacity="0.45"/><line x1="1600.0" y1="268.0" x2="1914.0" y2="575.0" stroke="#5ea33f" stroke-width="1" stroke-opacity="0.28"/><line x1="1447.0" y1="102.0" x2="1533.0" y2="40.0" stroke="#5ea33f" stroke-width="1" stroke-opacity="0.4"/><line x1="1447.0" y1="102.0" x2="1490.0" y2="174.0" stroke="#5ea33f" stroke-width="1" stroke-opacity="0.4"/><line x1="1490.0" y1="174.0" x2="1578.0" y2="112.0" stroke="#5ea33f" stroke-width="1" stroke-opacity="0.4"/><line x1="1820.0" y1="870.0" x2="1920.0" y2="790.0" stroke="#5ea33f" stroke-width="1" stroke-opacity="0.3"/><circle cx="1719" cy="535" r="73" fill="none" stroke="#68ac45" stroke-width="2.4" stroke-opacity="0.6"/><circle cx="1719" cy="535" r="68" fill="none" stroke="#5ea33f" stroke-width="1" stroke-opacity="0.35"/><circle cx="1719" cy="535" r="95" fill="none" stroke="#5ea33f" stroke-width="1" stroke-opacity="0.28" stroke-dasharray="6 5"/><rect x="1520.0" y="328.0" width="28.0" height="28.0" rx="0" fill="none" stroke="#7b7830" stroke-width="2" stroke-opacity="0.5"/><rect x="1520.0" y="481.0" width="28.0" height="28.0" rx="0" fill="none" stroke="#7b7830" stroke-width="2" stroke-opacity="0.5"/><rect x="1519.0" y="175.0" width="30.0" height="30.0" rx="0" fill="none" stroke="#7b7830" stroke-width="2" stroke-opacity="0.5"/><rect x="1505.0" y="639.0" width="22.0" height="22.0" rx="0" fill="none" stroke="#7b7830" stroke-width="2" stroke-opacity="0.5"/><rect x="1608.0" y="34.0" width="24.0" height="24.0" rx="0" fill="none" stroke="#7b7830" stroke-width="2" stroke-opacity="0.5"/><clipPath id="hc1"><rect x="1440" y="704" width="76" height="41"/></clipPath><rect x="1440.0" y="704.0" width="76.0" height="41.0" rx="0" fill="none" stroke="#5ea33f" stroke-width="1" stroke-opacity="0.44999999999999996"/><g clip-path="url(#hc1)"><line x1="1440.0" y1="704.0" x2="1399.0" y2="745.0" stroke="#5ea33f" stroke-width="0.8" stroke-opacity="0.35"/><line x1="1446.0" y1="704.0" x2="1405.0" y2="745.0" stroke="#5ea33f" stroke-width="0.8" stroke-opacity="0.35"/><line x1="1452.0" y1="704.0" x2="1411.0" y2="745.0" stroke="#5ea33f" stroke-width="0.8" stroke-opacity="0.35"/><line x1="1458.0" y1="704.0" x2="1417.0" y2="745.0" stroke="#5ea33f" stroke-width="0.8" stroke-opacity="0.35"/><line x1="1464.0" y1="704.0" x2="1423.0" y2="745.0" stroke="#5ea33f" stroke-width="0.8" stroke-opacity="0.35"/><line x1="1470.0" y1="704.0" x2="1429.0" y2="745.0" stroke="#5ea33f" stroke-width="0.8" stroke-opacity="0.35"/><line x1="1476.0" y1="704.0" x2="1435.0" y2="745.0" stroke="#5ea33f" stroke-width="0.8" stroke-opacity="0.35"/><line x1="1482.0" y1="704.0" x2="1441.0" y2="745.0" stroke="#5ea33f" stroke-width="0.8" stroke-opacity="0.35"/><line x1="1488.0" y1="704.0" x2="1447.0" y2="745.0" stroke="#5ea33f" stroke-width="0.8" stroke-opacity="0.35"/><line x1="1494.0" y1="704.0" x2="1453.0" y2="745.0" stroke="#5ea33f" stroke-width="0.8" stroke-opacity="0.35"/><line x1="1500.0" y1="704.0" x2="1459.0" y2="745.0" stroke="#5ea33f" stroke-width="0.8" stroke-opacity="0.35"/><line x1="1506.0" y1="704.0" x2="1465.0" y2="745.0" stroke="#5ea33f" stroke-width="0.8" stroke-opacity="0.35"/><line x1="1512.0" y1="704.0" x2="1471.0" y2="745.0" stroke="#5ea33f" stroke-width="0.8" stroke-opacity="0.35"/><line x1="1518.0" y1="704.0" x2="1477.0" y2="745.0" stroke="#5ea33f" stroke-width="0.8" stroke-opacity="0.35"/><line x1="1524.0" y1="704.0" x2="1483.0" y2="745.0" stroke="#5ea33f" stroke-width="0.8" stroke-opacity="0.35"/><line x1="1530.0" y1="704.0" x2="1489.0" y2="745.0" stroke="#5ea33f" stroke-width="0.8" stroke-opacity="0.35"/><line x1="1536.0" y1="704.0" x2="1495.0" y2="745.0" stroke="#5ea33f" stroke-width="0.8" stroke-opacity="0.35"/><line x1="1542.0" y1="704.0" x2="1501.0" y2="745.0" stroke="#5ea33f" stroke-width="0.8" stroke-opacity="0.35"/><line x1="1548.0" y1="704.0" x2="1507.0" y2="745.0" stroke="#5ea33f" stroke-width="0.8" stroke-opacity="0.35"/><line x1="1554.0" y1="704.0" x2="1513.0" y2="745.0" stroke="#5ea33f" stroke-width="0.8" stroke-opacity="0.35"/></g><clipPath id="hc2"><rect x="1532" y="535" width="80" height="44"/></clipPath><rect x="1532.0" y="535.0" width="80.0" height="44.0" rx="0" fill="none" stroke="#5ea33f" stroke-width="1" stroke-opacity="0.5"/><g clip-path="url(#hc2)"><line x1="1532.0" y1="535.0" x2="1488.0" y2="579.0" stroke="#5ea33f" stroke-width="0.8" stroke-opacity="0.4"/><line x1="1538.0" y1="535.0" x2="1494.0" y2="579.0" stroke="#5ea33f" stroke-width="0.8" stroke-opacity="0.4"/><line x1="1544.0" y1="535.0" x2="1500.0" y2="579.0" stroke="#5ea33f" stroke-width="0.8" stroke-opacity="0.4"/><line x1="1550.0" y1="535.0" x2="1506.0" y2="579.0" stroke="#5ea33f" stroke-width="0.8" stroke-opacity="0.4"/><line x1="1556.0" y1="535.0" x2="1512.0" y2="579.0" stroke="#5ea33f" stroke-width="0.8" stroke-opacity="0.4"/><line x1="1562.0" y1="535.0" x2="1518.0" y2="579.0" stroke="#5ea33f" stroke-width="0.8" stroke-opacity="0.4"/><line x1="1568.0" y1="535.0" x2="1524.0" y2="579.0" stroke="#5ea33f" stroke-width="0.8" stroke-opacity="0.4"/><line x1="1574.0" y1="535.0" x2="1530.0" y2="579.0" stroke="#5ea33f" stroke-width="0.8" stroke-opacity="0.4"/><line x1="1580.0" y1="535.0" x2="1536.0" y2="579.0" stroke="#5ea33f" stroke-width="0.8" stroke-opacity="0.4"/><line x1="1586.0" y1="535.0" x2="1542.0" y2="579.0" stroke="#5ea33f" stroke-width="0.8" stroke-opacity="0.4"/><line x1="1592.0" y1="535.0" x2="1548.0" y2="579.0" stroke="#5ea33f" stroke-width="0.8" stroke-opacity="0.4"/><line x1="1598.0" y1="535.0" x2="1554.0" y2="579.0" stroke="#5ea33f" stroke-width="0.8" stroke-opacity="0.4"/><line x1="1604.0" y1="535.0" x2="1560.0" y2="579.0" stroke="#5ea33f" stroke-width="0.8" stroke-opacity="0.4"/><line x1="1610.0" y1="535.0" x2="1566.0" y2="579.0" stroke="#5ea33f" stroke-width="0.8" stroke-opacity="0.4"/><line x1="1616.0" y1="535.0" x2="1572.0" y2="579.0" stroke="#5ea33f" stroke-width="0.8" stroke-opacity="0.4"/><line x1="1622.0" y1="535.0" x2="1578.0" y2="579.0" stroke="#5ea33f" stroke-width="0.8" stroke-opacity="0.4"/><line x1="1628.0" y1="535.0" x2="1584.0" y2="579.0" stroke="#5ea33f" stroke-width="0.8" stroke-opacity="0.4"/><line x1="1634.0" y1="535.0" x2="1590.0" y2="579.0" stroke="#5ea33f" stroke-width="0.8" stroke-opacity="0.4"/><line x1="1640.0" y1="535.0" x2="1596.0" y2="579.0" stroke="#5ea33f" stroke-width="0.8" stroke-opacity="0.4"/><line x1="1646.0" y1="535.0" x2="1602.0" y2="579.0" stroke="#5ea33f" stroke-width="0.8" stroke-opacity="0.4"/><line x1="1652.0" y1="535.0" x2="1608.0" y2="579.0" stroke="#5ea33f" stroke-width="0.8" stroke-opacity="0.4"/></g><clipPath id="hc3"><rect x="1480" y="695" width="32" height="60"/></clipPath><rect x="1480.0" y="695.0" width="32.0" height="60.0" rx="0" fill="none" stroke="#7b7830" stroke-width="1" stroke-opacity="0.44999999999999996"/><g clip-path="url(#hc3)"><line x1="1480.0" y1="695.0" x2="1420.0" y2="755.0" stroke="#7b7830" stroke-width="0.8" stroke-opacity="0.35"/><line x1="1485.0" y1="695.0" x2="1425.0" y2="755.0" stroke="#7b7830" stroke-width="0.8" stroke-opacity="0.35"/><line x1="1490.0" y1="695.0" x2="1430.0" y2="755.0" stroke="#7b7830" stroke-width="0.8" stroke-opacity="0.35"/><line x1="1495.0" y1="695.0" x2="1435.0" y2="755.0" stroke="#7b7830" stroke-width="0.8" stroke-opacity="0.35"/><line x1="1500.0" y1="695.0" x2="1440.0" y2="755.0" stroke="#7b7830" stroke-width="0.8" stroke-opacity="0.35"/><line x1="1505.0" y1="695.0" x2="1445.0" y2="755.0" stroke="#7b7830" stroke-width="0.8" stroke-opacity="0.35"/><line x1="1510.0" y1="695.0" x2="1450.0" y2="755.0" stroke="#7b7830" stroke-width="0.8" stroke-opacity="0.35"/><line x1="1515.0" y1="695.0" x2="1455.0" y2="755.0" stroke="#7b7830" stroke-width="0.8" stroke-opacity="0.35"/><line x1="1520.0" y1="695.0" x2="1460.0" y2="755.0" stroke="#7b7830" stroke-width="0.8" stroke-opacity="0.35"/><line x1="1525.0" y1="695.0" x2="1465.0" y2="755.0" stroke="#7b7830" stroke-width="0.8" stroke-opacity="0.35"/><line x1="1530.0" y1="695.0" x2="1470.0" y2="755.0" stroke="#7b7830" stroke-width="0.8" stroke-opacity="0.35"/><line x1="1535.0" y1="695.0" x2="1475.0" y2="755.0" stroke="#7b7830" stroke-width="0.8" stroke-opacity="0.35"/><line x1="1540.0" y1="695.0" x2="1480.0" y2="755.0" stroke="#7b7830" stroke-width="0.8" stroke-opacity="0.35"/><line x1="1545.0" y1="695.0" x2="1485.0" y2="755.0" stroke="#7b7830" stroke-width="0.8" stroke-opacity="0.35"/><line x1="1550.0" y1="695.0" x2="1490.0" y2="755.0" stroke="#7b7830" stroke-width="0.8" stroke-opacity="0.35"/><line x1="1555.0" y1="695.0" x2="1495.0" y2="755.0" stroke="#7b7830" stroke-width="0.8" stroke-opacity="0.35"/><line x1="1560.0" y1="695.0" x2="1500.0" y2="755.0" stroke="#7b7830" stroke-width="0.8" stroke-opacity="0.35"/><line x1="1565.0" y1="695.0" x2="1505.0" y2="755.0" stroke="#7b7830" stroke-width="0.8" stroke-opacity="0.35"/><line x1="1570.0" y1="695.0" x2="1510.0" y2="755.0" stroke="#7b7830" stroke-width="0.8" stroke-opacity="0.35"/></g><rect x="1700.0" y="600.0" width="100.0" height="40.0" rx="0" fill="none" stroke="#5ea33f" stroke-width="1" stroke-opacity="0.33"/><rect x="1850.0" y="700.0" width="50.0" height="30.0" rx="0" fill="none" stroke="#5ea33f" stroke-width="1" stroke-opacity="0.33"/><rect x="1870.0" y="560.0" width="40.0" height="60.0" rx="0" fill="none" stroke="#5ea33f" stroke-width="1" stroke-opacity="0.33"/><rect x="1830.0" y="760.0" width="60.0" height="28.0" rx="0" fill="none" stroke="#5ea33f" stroke-width="1" stroke-opacity="0.33"/><rect x="1850.0" y="880.0" width="40.0" height="60.0" rx="0" fill="none" stroke="#5ea33f" stroke-width="1" stroke-opacity="0.33"/><rect x="1650.0" y="410.0" width="40.0" height="40.0" rx="0" fill="none" stroke="#5ea33f" stroke-width="1" stroke-opacity="0.33"/><rect x="1538.0" y="560.0" width="40.0" height="30.0" rx="0" fill="none" stroke="#5ea33f" stroke-width="1" stroke-opacity="0.33"/><rect x="1595.0" y="600.0" width="40.0" height="40.0" rx="0" fill="none" stroke="#5ea33f" stroke-width="1" stroke-opacity="0.33"/><rect x="1566.0" y="848.0" width="24.0" height="32.0" rx="0" fill="none" stroke="#7b7830" stroke-width="1" stroke-opacity="0.35"/><rect x="1553.0" y="852.0" width="10.0" height="8.0" rx="0" fill="none" stroke="#7b7830" stroke-width="1" stroke-opacity="0.3"/><rect x="1553.0" y="868.0" width="10.0" height="8.0" rx="0" fill="none" stroke="#7b7830" stroke-width="1" stroke-opacity="0.3"/><rect x="1593.0" y="852.0" width="10.0" height="8.0" rx="0" fill="none" stroke="#7b7830" stroke-width="1" stroke-opacity="0.3"/><rect x="1593.0" y="868.0" width="10.0" height="8.0" rx="0" fill="none" stroke="#7b7830" stroke-width="1" stroke-opacity="0.3"/><rect x="1566.0" y="934.0" width="24.0" height="32.0" rx="0" fill="none" stroke="#7b7830" stroke-width="1" stroke-opacity="0.35"/><rect x="1553.0" y="938.0" width="10.0" height="8.0" rx="0" fill="none" stroke="#7b7830" stroke-width="1" stroke-opacity="0.3"/><rect x="1553.0" y="954.0" width="10.0" height="8.0" rx="0" fill="none" stroke="#7b7830" stroke-width="1" stroke-opacity="0.3"/><rect x="1593.0" y="938.0" width="10.0" height="8.0" rx="0" fill="none" stroke="#7b7830" stroke-width="1" stroke-opacity="0.3"/><rect x="1593.0" y="954.0" width="10.0" height="8.0" rx="0" fill="none" stroke="#7b7830" stroke-width="1" stroke-opacity="0.3"/><rect x="1566.0" y="1024.0" width="24.0" height="32.0" rx="0" fill="none" stroke="#7b7830" stroke-width="1" stroke-opacity="0.35"/><rect x="1553.0" y="1028.0" width="10.0" height="8.0" rx="0" fill="none" stroke="#7b7830" stroke-width="1" stroke-opacity="0.3"/><rect x="1553.0" y="1044.0" width="10.0" height="8.0" rx="0" fill="none" stroke="#7b7830" stroke-width="1" stroke-opacity="0.3"/><rect x="1593.0" y="1028.0" width="10.0" height="8.0" rx="0" fill="none" stroke="#7b7830" stroke-width="1" stroke-opacity="0.3"/><rect x="1593.0" y="1044.0" width="10.0" height="8.0" rx="0" fill="none" stroke="#7b7830" stroke-width="1" stroke-opacity="0.3"/><rect x="1630.0" y="1024.0" width="24.0" height="32.0" rx="0" fill="none" stroke="#7b7830" stroke-width="1" stroke-opacity="0.35"/><rect x="1617.0" y="1028.0" width="10.0" height="8.0" rx="0" fill="none" stroke="#7b7830" stroke-width="1" stroke-opacity="0.3"/><rect x="1617.0" y="1044.0" width="10.0" height="8.0" rx="0" fill="none" stroke="#7b7830" stroke-width="1" stroke-opacity="0.3"/><rect x="1657.0" y="1028.0" width="10.0" height="8.0" rx="0" fill="none" stroke="#7b7830" stroke-width="1" stroke-opacity="0.3"/><rect x="1657.0" y="1044.0" width="10.0" height="8.0" rx="0" fill="none" stroke="#7b7830" stroke-width="1" stroke-opacity="0.3"/><rect x="1728.5" y="864.0" width="69.0" height="175.0" rx="25" fill="none" stroke="#7b7830" stroke-width="1" stroke-opacity="0.38" stroke-dasharray="4 2"/><rect x="1716.0" y="872.0" width="9.0" height="10.0" rx="0" fill="none" stroke="#7b7830" stroke-width="1" stroke-opacity="0.3"/><rect x="1801.0" y="872.0" width="9.0" height="10.0" rx="0" fill="none" stroke="#7b7830" stroke-width="1" stroke-opacity="0.3"/><rect x="1716.0" y="894.0" width="9.0" height="10.0" rx="0" fill="none" stroke="#7b7830" stroke-width="1" stroke-opacity="0.3"/><rect x="1801.0" y="894.0" width="9.0" height="10.0" rx="0" fill="none" stroke="#7b7830" stroke-width="1" stroke-opacity="0.3"/><rect x="1716.0" y="916.0" width="9.0" height="10.0" rx="0" fill="none" stroke="#7b7830" stroke-width="1" stroke-opacity="0.3"/><rect x="1801.0" y="916.0" width="9.0" height="10.0" rx="0" fill="none" stroke="#7b7830" stroke-width="1" stroke-opacity="0.3"/><rect x="1716.0" y="938.0" width="9.0" height="10.0" rx="0" fill="none" stroke="#7b7830" stroke-width="1" stroke-opacity="0.3"/><rect x="1801.0" y="938.0" width="9.0" height="10.0" rx="0" fill="none" stroke="#7b7830" stroke-width="1" stroke-opacity="0.3"/><rect x="1716.0" y="960.0" width="9.0" height="10.0" rx="0" fill="none" stroke="#7b7830" stroke-width="1" stroke-opacity="0.3"/><rect x="1801.0" y="960.0" width="9.0" height="10.0" rx="0" fill="none" stroke="#7b7830" stroke-width="1" stroke-opacity="0.3"/><rect x="1716.0" y="982.0" width="9.0" height="10.0" rx="0" fill="none" stroke="#7b7830" stroke-width="1" stroke-opacity="0.3"/><rect x="1801.0" y="982.0" width="9.0" height="10.0" rx="0" fill="none" stroke="#7b7830" stroke-width="1" stroke-opacity="0.3"/><rect x="1716.0" y="1004.0" width="9.0" height="10.0" rx="0" fill="none" stroke="#7b7830" stroke-width="1" stroke-opacity="0.3"/><rect x="1801.0" y="1004.0" width="9.0" height="10.0" rx="0" fill="none" stroke="#7b7830" stroke-width="1" stroke-opacity="0.3"/><rect x="1716.0" y="1026.0" width="9.0" height="10.0" rx="0" fill="none" stroke="#7b7830" stroke-width="1" stroke-opacity="0.3"/><rect x="1801.0" y="1026.0" width="9.0" height="10.0" rx="0" fill="none" stroke="#7b7830" stroke-width="1" stroke-opacity="0.3"/><ellipse cx="1541" cy="695" rx="5" ry="7" fill="none" stroke="#6aae46" stroke-width="1" stroke-opacity="0.45"/><ellipse cx="1566" cy="698" rx="5" ry="7" fill="none" stroke="#6aae46" stroke-width="1" stroke-opacity="0.45"/><ellipse cx="1601" cy="702" rx="5" ry="7" fill="none" stroke="#6aae46" stroke-width="1" stroke-opacity="0.45"/><ellipse cx="1730" cy="696" rx="5" ry="7" fill="none" stroke="#6aae46" stroke-width="1" stroke-opacity="0.45"/><ellipse cx="1760" cy="700" rx="5" ry="7" fill="none" stroke="#6aae46" stroke-width="1" stroke-opacity="0.45"/><ellipse cx="1785" cy="700" rx="5" ry="7" fill="none" stroke="#6aae46" stroke-width="1" stroke-opacity="0.45"/><ellipse cx="1807" cy="697" rx="5" ry="7" fill="none" stroke="#6aae46" stroke-width="1" stroke-opacity="0.45"/><ellipse cx="1750" cy="785" rx="5" ry="7" fill="none" stroke="#6aae46" stroke-width="1" stroke-opacity="0.45"/><ellipse cx="1790" cy="785" rx="5" ry="7" fill="none" stroke="#6aae46" stroke-width="1" stroke-opacity="0.45"/><circle cx="1606" cy="478" r="5" fill="none" stroke="#5ea33f" stroke-width="1" stroke-opacity="0.45"/><circle cx="1606" cy="520" r="5" fill="none" stroke="#5ea33f" stroke-width="1" stroke-opacity="0.45"/><circle cx="1612" cy="658" r="5" fill="none" stroke="#5ea33f" stroke-width="1" stroke-opacity="0.45"/><circle cx="1612" cy="740" r="5" fill="none" stroke="#5ea33f" stroke-width="1" stroke-opacity="0.45"/><circle cx="1560" cy="760" r="5" fill="none" stroke="#5ea33f" stroke-width="1" stroke-opacity="0.45"/><circle cx="1550" cy="890" r="5" fill="none" stroke="#5ea33f" stroke-width="1" stroke-opacity="0.45"/><circle cx="1617" cy="1000" r="5" fill="none" stroke="#5ea33f" stroke-width="1" stroke-opacity="0.45"/><circle cx="1840" cy="866" r="5" fill="none" stroke="#5ea33f" stroke-width="1" stroke-opacity="0.45"/><circle cx="1690" cy="948" r="5" fill="none" stroke="#5ea33f" stroke-width="1" stroke-opacity="0.45"/><circle cx="1870" cy="900" r="5" fill="none" stroke="#5ea33f" stroke-width="1" stroke-opacity="0.45"/><circle cx="1655" cy="413" r="5" fill="none" stroke="#5ea33f" stroke-width="1" stroke-opacity="0.45"/><circle cx="1650" cy="480" r="5" fill="none" stroke="#5ea33f" stroke-width="1" stroke-opacity="0.45"/><circle cx="1761" cy="380" r="5" fill="none" stroke="#5ea33f" stroke-width="1" stroke-opacity="0.45"/><circle cx="1775" cy="410" r="5" fill="none" stroke="#5ea33f" stroke-width="1" stroke-opacity="0.45"/><circle cx="1515" cy="960" r="5" fill="none" stroke="#5ea33f" stroke-width="1" stroke-opacity="0.45"/><circle cx="1615" cy="960" r="5" fill="none" stroke="#5ea33f" stroke-width="1" stroke-opacity="0.45"/><circle cx="1717" cy="960" r="5" fill="none" stroke="#5ea33f" stroke-width="1" stroke-opacity="0.45"/><circle cx="1818" cy="960" r="5" fill="none" stroke="#5ea33f" stroke-width="1" stroke-opacity="0.45"/><circle cx="1685.5" cy="849" r="8" fill="none" stroke="#6aae46" stroke-width="1.2" stroke-opacity="0.42"/><circle cx="1685.5" cy="849" r="16" fill="none" stroke="#6aae46" stroke-width="1.2" stroke-opacity="0.42"/><circle cx="1685.5" cy="849" r="26" fill="none" stroke="#6aae46" stroke-width="1.2" stroke-opacity="0.42"/><circle cx="1638.7" cy="713.6" r="8" fill="none" stroke="#6aae46" stroke-width="1.2" stroke-opacity="0.42"/><circle cx="1638.7" cy="713.6" r="4" fill="none" stroke="#6aae46" stroke-width="1.2" stroke-opacity="0.42"/><path d="M1618 745 C1614 720 1626 700 1650 696 C1668 700 1664 732 1668 748 C1670 758 1680 752 1696 748 C1682 770 1668 788 1671 806 C1674 822 1690 814 1693 808 M1618 745 C1610 790 1620 850 1660 876 C1670 882 1680 881 1686 879 M1655 700 C1668 715 1662 735 1648 742" fill="none" stroke="#6aae46" stroke-width="1.2" stroke-opacity="0.42"/><text x="0" y="0" transform="translate(1735 890) rotate(-90)" font-family="Liberation Sans" font-weight="400" font-size="32" textLength="198" lengthAdjust="spacingAndGlyphs" fill="none" stroke="#6aae46" stroke-width="1.3" stroke-opacity="0.45">openSUSE</text><line x1="1647.1" y1="190.1" x2="1694.1" y2="190.1" stroke="#7b7830" stroke-width="1" stroke-opacity="0.34425485839826164"/><line x1="1762.6" y1="985.4" x2="1783.5" y2="985.4" stroke="#7b7830" stroke-width="1" stroke-opacity="0.26672913673247717"/><line x1="1513.2" y1="476.9" x2="1513.2" y2="534.5" stroke="#7b7830" stroke-width="1" stroke-opacity="0.3694899401414975"/><line x1="1762.7" y1="96.8" x2="1805.9" y2="96.8" stroke="#7b7830" stroke-width="1" stroke-opacity="0.375251021118584"/><line x1="1869.3" y1="335.5" x2="1869.3" y2="352.2" stroke="#7b7830" stroke-width="1" stroke-opacity="0.2941827379293469"/><line x1="1802.5" y1="140.0" x2="1802.5" y2="182.3" stroke="#5ea33f" stroke-width="1" stroke-opacity="0.2544795085451462"/><line x1="1492.0" y1="94.5" x2="1512.4" y2="94.5" stroke="#5ea33f" stroke-width="1" stroke-opacity="0.3354457549961614"/><line x1="1892.9" y1="410.9" x2="1915.8" y2="410.9" stroke="#5ea33f" stroke-width="1" stroke-opacity="0.3197988867459143"/><line x1="1759.2" y1="582.4" x2="1759.2" y2="642.9" stroke="#5ea33f" stroke-width="1" stroke-opacity="0.2375875529780373"/><line x1="1532.1" y1="470.2" x2="1585.5" y2="470.2" stroke="#5ea33f" stroke-width="1" stroke-opacity="0.36665404243612754"/><line x1="1906.6" y1="113.3" x2="1948.1" y2="113.3" stroke="#2f6e52" stroke-width="1" stroke-opacity="0.2480244724382391"/><line x1="1726.4" y1="867.1" x2="1738.5" y2="867.1" stroke="#7b7830" stroke-width="1" stroke-opacity="0.36893621902158746"/><line x1="1795.5" y1="95.6" x2="1845.5" y2="95.6" stroke="#5ea33f" stroke-width="1" stroke-opacity="0.23691910641882985"/><line x1="1797.2" y1="55.6" x2="1832.9" y2="55.6" stroke="#5ea33f" stroke-width="1" stroke-opacity="0.3021839086966154"/><line x1="1592.3" y1="333.2" x2="1592.3" y2="385.5" stroke="#5ea33f" stroke-width="1" stroke-opacity="0.2581899406266454"/><line x1="1505.8" y1="502.7" x2="1505.8" y2="543.7" stroke="#5ea33f" stroke-width="1" stroke-opacity="0.34385596756714826"/><line x1="1624.3" y1="467.2" x2="1653.8" y2="467.2" stroke="#5ea33f" stroke-width="1" stroke-opacity="0.37154624079279824"/><line x1="1568.3" y1="275.1" x2="1590.3" y2="275.1" stroke="#5ea33f" stroke-width="1" stroke-opacity="0.34621871231365725"/><line x1="1626.1" y1="184.7" x2="1626.1" y2="224.7" stroke="#2f6e52" stroke-width="1" stroke-opacity="0.3706195851050191"/><line x1="1734.4" y1="679.2" x2="1734.4" y2="727.8" stroke="#7b7830" stroke-width="1" stroke-opacity="0.271328744440575"/><line x1="1903.0" y1="745.2" x2="1944.6" y2="745.2" stroke="#5ea33f" stroke-width="1" stroke-opacity="0.2597957664640546"/><line x1="1783.6" y1="97.2" x2="1795.6" y2="97.2" stroke="#5ea33f" stroke-width="1" stroke-opacity="0.2681253736649501"/><line x1="1770.0" y1="139.3" x2="1770.0" y2="181.3" stroke="#7b7830" stroke-width="1" stroke-opacity="0.3697897517138867"/><line x1="1498.0" y1="249.9" x2="1498.0" y2="280.5" stroke="#2f6e52" stroke-width="1" stroke-opacity="0.37109360478429426"/><line x1="1716.6" y1="152.9" x2="1753.8" y2="152.9" stroke="#5ea33f" stroke-width="1" stroke-opacity="0.2760790209231297"/><line x1="1548.8" y1="817.7" x2="1601.3" y2="817.7" stroke="#5ea33f" stroke-width="1" stroke-opacity="0.3457710756243121"/><line x1="1455.8" y1="1028.6" x2="1455.8" y2="1068.3" stroke="#5ea33f" stroke-width="1" stroke-opacity="0.3180135171758718"/><line x1="1831.9" y1="344.4" x2="1878.5" y2="344.4" stroke="#7b7830" stroke-width="1" stroke-opacity="0.3192393571815604"/><line x1="1667.7" y1="207.1" x2="1667.7" y2="261.4" stroke="#2f6e52" stroke-width="1" stroke-opacity="0.3072883850679422"/><line x1="1843.3" y1="826.7" x2="1843.3" y2="846.4" stroke="#5ea33f" stroke-width="1" stroke-opacity="0.34366658866507466"/><line x1="1596.9" y1="574.5" x2="1596.9" y2="603.8" stroke="#7b7830" stroke-width="1" stroke-opacity="0.377920717340614"/><line x1="1715.7" y1="234.9" x2="1715.7" y2="279.2" stroke="#2f6e52" stroke-width="1" stroke-opacity="0.2694455355533447"/><line x1="1915.8" y1="1032.8" x2="1945.7" y2="1032.8" stroke="#5ea33f" stroke-width="1" stroke-opacity="0.20043142948574694"/><line x1="1653.9" y1="537.8" x2="1653.9" y2="604.9" stroke="#7b7830" stroke-width="1" stroke-opacity="0.27589468525230765"/><line x1="1847.6" y1="120.8" x2="1847.6" y2="168.5" stroke="#5ea33f" stroke-width="1" stroke-opacity="0.336460576819618"/><line x1="1718.3" y1="219.1" x2="1718.3" y2="274.4" stroke="#2f6e52" stroke-width="1" stroke-opacity="0.19734997153404885"/><line x1="1818.0" y1="517.4" x2="1870.6" y2="517.4" stroke="#7b7830" stroke-width="1" stroke-opacity="0.324959733126843"/><line x1="1538.0" y1="190.4" x2="1538.0" y2="252.7" stroke="#5ea33f" stroke-width="1" stroke-opacity="0.3023146674432017"/><line x1="1716.6" y1="1014.5" x2="1716.6" y2="1031.8" stroke="#5ea33f" stroke-width="1" stroke-opacity="0.18427933486438233"/><line x1="1819.7" y1="139.7" x2="1819.7" y2="192.7" stroke="#5ea33f" stroke-width="1" stroke-opacity="0.26676188735149714"/><line x1="1857.4" y1="253.2" x2="1857.4" y2="276.3" stroke="#2f6e52" stroke-width="1" stroke-opacity="0.2802323839672497"/><line x1="1648.1" y1="602.5" x2="1706.2" y2="602.5" stroke="#7b7830" stroke-width="1" stroke-opacity="0.3620034112631113"/><line x1="1709.5" y1="643.3" x2="1709.5" y2="705.6" stroke="#5ea33f" stroke-width="1" stroke-opacity="0.3454279364909546"/><line x1="1540.4" y1="191.1" x2="1540.4" y2="229.8" stroke="#5ea33f" stroke-width="1" stroke-opacity="0.33530123141871077"/><line x1="1838.7" y1="189.0" x2="1855.2" y2="189.0" stroke="#7b7830" stroke-width="1" stroke-opacity="0.29129512498044263"/><line x1="1735.6" y1="614.1" x2="1790.7" y2="614.1" stroke="#7b7830" stroke-width="1" stroke-opacity="0.35664556288763305"/><line x1="1577.1" y1="76.2" x2="1577.1" y2="90.1" stroke="#5ea33f" stroke-width="1" stroke-opacity="0.29234587733129525"/><line x1="1889.0" y1="496.5" x2="1933.7" y2="496.5" stroke="#5ea33f" stroke-width="1" stroke-opacity="0.3185462005096458"/><line x1="1742.0" y1="533.0" x2="1742.0" y2="597.5" stroke="#2f6e52" stroke-width="1" stroke-opacity="0.3645568426840213"/><line x1="1583.5" y1="501.0" x2="1616.5" y2="501.0" stroke="#5ea33f" stroke-width="1" stroke-opacity="0.2684236176550087"/><line x1="1604.5" y1="108.6" x2="1652.6" y2="108.6" stroke="#7b7830" stroke-width="1" stroke-opacity="0.3594052865757534"/><line x1="1815.8" y1="723.9" x2="1832.4" y2="723.9" stroke="#5ea33f" stroke-width="1" stroke-opacity="0.37350895653327676"/><line x1="1903.3" y1="449.4" x2="1940.5" y2="449.4" stroke="#5ea33f" stroke-width="1" stroke-opacity="0.21229321197617582"/><line x1="1734.5" y1="387.4" x2="1754.2" y2="387.4" stroke="#2f6e52" stroke-width="1" stroke-opacity="0.19843880522571627"/><line x1="1654.0" y1="512.7" x2="1654.0" y2="562.9" stroke="#5ea33f" stroke-width="1" stroke-opacity="0.24629957782839812"/><line x1="1733.1" y1="99.4" x2="1800.2" y2="99.4" stroke="#5ea33f" stroke-width="1" stroke-opacity="0.3743391917294148"/><line x1="1617.6" y1="73.5" x2="1617.6" y2="128.2" stroke="#2f6e52" stroke-width="1" stroke-opacity="0.3311553095721536"/><line x1="1866.1" y1="740.4" x2="1866.1" y2="805.2" stroke="#5ea33f" stroke-width="1" stroke-opacity="0.20987358948081564"/><line x1="1757.6" y1="766.0" x2="1771.0" y2="766.0" stroke="#7b7830" stroke-width="1" stroke-opacity="0.33991751058132286"/><line x1="1882.7" y1="313.8" x2="1891.8" y2="313.8" stroke="#7b7830" stroke-width="1" stroke-opacity="0.34032571831427794"/><line x1="1868.5" y1="101.8" x2="1868.5" y2="161.6" stroke="#5ea33f" stroke-width="1" stroke-opacity="0.1823092662381407"/><line x1="1691.4" y1="991.4" x2="1736.7" y2="991.4" stroke="#7b7830" stroke-width="1" stroke-opacity="0.28538300530543437"/><line x1="1526.3" y1="201.2" x2="1526.3" y2="212.2" stroke="#5ea33f" stroke-width="1" stroke-opacity="0.3664493777036554"/><line x1="1741.1" y1="247.8" x2="1741.1" y2="282.5" stroke="#5ea33f" stroke-width="1" stroke-opacity="0.23410447321385297"/><line x1="1918.1" y1="70.7" x2="1927.2" y2="70.7" stroke="#5ea33f" stroke-width="1" stroke-opacity="0.2828469822924743"/><line x1="1704.6" y1="721.9" x2="1704.6" y2="768.9" stroke="#5ea33f" stroke-width="1" stroke-opacity="0.2891812503853648"/><line x1="1909.6" y1="354.6" x2="1909.6" y2="375.5" stroke="#5ea33f" stroke-width="1" stroke-opacity="0.2485409250834949"/><line x1="1812.1" y1="698.5" x2="1812.1" y2="730.8" stroke="#2f6e52" stroke-width="1" stroke-opacity="0.3763763863658734"/><line x1="1445.5" y1="687.5" x2="1506.3" y2="687.5" stroke="#5ea33f" stroke-width="1" stroke-opacity="0.21264930405527516"/><line x1="1863.0" y1="944.3" x2="1863.0" y2="992.6" stroke="#2f6e52" stroke-width="1" stroke-opacity="0.2997556827101304"/><line x1="1477.3" y1="226.2" x2="1477.3" y2="250.4" stroke="#7b7830" stroke-width="1" stroke-opacity="0.23264861339947782"/><line x1="1910.4" y1="605.3" x2="1933.0" y2="605.3" stroke="#2f6e52" stroke-width="1" stroke-opacity="0.22357317143169628"/><line x1="1652.7" y1="119.9" x2="1652.7" y2="144.7" stroke="#5ea33f" stroke-width="1" stroke-opacity="0.22963587895741408"/><line x1="1513.3" y1="888.3" x2="1529.9" y2="888.3" stroke="#7b7830" stroke-width="1" stroke-opacity="0.2587957281209441"/><line x1="1781.7" y1="120.5" x2="1781.7" y2="186.0" stroke="#5ea33f" stroke-width="1" stroke-opacity="0.31150873466253454"/><line x1="1876.9" y1="440.2" x2="1876.9" y2="467.8" stroke="#5ea33f" stroke-width="1" stroke-opacity="0.20989262980845058"/><line x1="1787.1" y1="77.9" x2="1787.1" y2="136.0" stroke="#5ea33f" stroke-width="1" stroke-opacity="0.32677042469539236"/><line x1="1545.8" y1="580.9" x2="1545.8" y2="619.2" stroke="#7b7830" stroke-width="1" stroke-opacity="0.34528182430039606"/><line x1="1881.9" y1="747.7" x2="1931.5" y2="747.7" stroke="#5ea33f" stroke-width="1" stroke-opacity="0.19701834057444412"/><line x1="1784.7" y1="1037.6" x2="1784.7" y2="1068.2" stroke="#5ea33f" stroke-width="1" stroke-opacity="0.29170544929918696"/><line x1="1780.3" y1="745.3" x2="1817.7" y2="745.3" stroke="#7b7830" stroke-width="1" stroke-opacity="0.27138970493927234"/><line x1="1896.1" y1="973.0" x2="1909.6" y2="973.0" stroke="#7b7830" stroke-width="1" stroke-opacity="0.32914558192609"/><line x1="1851.1" y1="918.7" x2="1851.1" y2="940.8" stroke="#5ea33f" stroke-width="1" stroke-opacity="0.22614722540949073"/><line x1="1710.5" y1="918.1" x2="1710.5" y2="930.7" stroke="#2f6e52" stroke-width="1" stroke-opacity="0.33339402116350453"/><line x1="1786.9" y1="113.2" x2="1786.9" y2="130.0" stroke="#2f6e52" stroke-width="1" stroke-opacity="0.3103068723428506"/><line x1="1778.3" y1="171.8" x2="1778.3" y2="208.8" stroke="#5ea33f" stroke-width="1" stroke-opacity="0.2337545531578496"/><line x1="1806.5" y1="740.1" x2="1831.9" y2="740.1" stroke="#2f6e52" stroke-width="1" stroke-opacity="0.2729325706748629"/><line x1="1532.4" y1="968.6" x2="1552.3" y2="968.6" stroke="#7b7830" stroke-width="1" stroke-opacity="0.36725086819074326"/><line x1="1709.9" y1="891.3" x2="1776.0" y2="891.3" stroke="#5ea33f" stroke-width="1" stroke-opacity="0.37879339228370373"/><line x1="1890.4" y1="1007.2" x2="1890.4" y2="1019.7" stroke="#7b7830" stroke-width="1" stroke-opacity="0.20834813557190623"/><line x1="1903.3" y1="171.0" x2="1903.3" y2="228.2" stroke="#2f6e52" stroke-width="1" stroke-opacity="0.3573724319229686"/><line x1="1599.5" y1="972.8" x2="1599.5" y2="1010.0" stroke="#7b7830" stroke-width="1" stroke-opacity="0.2118130537921048"/><line x1="1802.3" y1="456.9" x2="1854.0" y2="456.9" stroke="#5ea33f" stroke-width="1" stroke-opacity="0.24879202928558908"/><line x1="1862.6" y1="33.8" x2="1862.6" y2="86.9" stroke="#5ea33f" stroke-width="1" stroke-opacity="0.2040082695184365"/><line x1="1814.6" y1="976.8" x2="1840.0" y2="976.8" stroke="#2f6e52" stroke-width="1" stroke-opacity="0.1929954701556256"/><line x1="1873.5" y1="112.1" x2="1937.1" y2="112.1" stroke="#2f6e52" stroke-width="1" stroke-opacity="0.3508510533694448"/><line x1="1482.8" y1="725.8" x2="1528.9" y2="725.8" stroke="#5ea33f" stroke-width="1" stroke-opacity="0.2298649432823637"/><line x1="1732.5" y1="231.0" x2="1732.5" y2="261.4" stroke="#5ea33f" stroke-width="1" stroke-opacity="0.35685331110508933"/><line x1="1782.2" y1="989.3" x2="1846.6" y2="989.3" stroke="#5ea33f" stroke-width="1" stroke-opacity="0.3239145163902296"/><line x1="1822.0" y1="504.5" x2="1822.0" y2="557.7" stroke="#2f6e52" stroke-width="1" stroke-opacity="0.2771150160565628"/><line x1="1749.1" y1="211.0" x2="1749.1" y2="243.9" stroke="#2f6e52" stroke-width="1" stroke-opacity="0.23955437310895736"/><line x1="1911.7" y1="304.7" x2="1911.7" y2="352.0" stroke="#2f6e52" stroke-width="1" stroke-opacity="0.27663640492755426"/><line x1="1533.2" y1="706.1" x2="1545.7" y2="706.1" stroke="#5ea33f" stroke-width="1" stroke-opacity="0.2900773084462065"/><line x1="1651.5" y1="827.7" x2="1685.1" y2="827.7" stroke="#5ea33f" stroke-width="1" stroke-opacity="0.22881712658809794"/><line x1="1751.5" y1="366.6" x2="1751.5" y2="396.7" stroke="#5ea33f" stroke-width="1" stroke-opacity="0.357450291842344"/><line x1="1689.1" y1="465.7" x2="1689.1" y2="505.2" stroke="#5ea33f" stroke-width="1" stroke-opacity="0.23404796948761208"/><line x1="1727.0" y1="633.8" x2="1727.0" y2="663.5" stroke="#5ea33f" stroke-width="1" stroke-opacity="0.19851963143202792"/><line x1="1676.1" y1="708.8" x2="1676.1" y2="742.7" stroke="#2f6e52" stroke-width="1" stroke-opacity="0.3497367352460905"/><line x1="1454.4" y1="65.8" x2="1504.9" y2="65.8" stroke="#5ea33f" stroke-width="1" stroke-opacity="0.3736562531995423"/><line x1="1500.1" y1="1006.9" x2="1563.8" y2="1006.9" stroke="#5ea33f" stroke-width="1" stroke-opacity="0.37444822437904834"/><line x1="1526.0" y1="193.8" x2="1526.0" y2="233.1" stroke="#7b7830" stroke-width="1" stroke-opacity="0.3682981118938258"/><line x1="1788.8" y1="833.5" x2="1824.2" y2="833.5" stroke="#7b7830" stroke-width="1" stroke-opacity="0.18027320799574048"/><line x1="1757.1" y1="71.4" x2="1757.1" y2="122.3" stroke="#5ea33f" stroke-width="1" stroke-opacity="0.3052945471581726"/><line x1="1700.3" y1="832.5" x2="1700.3" y2="846.5" stroke="#2f6e52" stroke-width="1" stroke-opacity="0.2848873364084072"/><line x1="1677.8" y1="266.3" x2="1677.8" y2="310.4" stroke="#7b7830" stroke-width="1" stroke-opacity="0.28749526366818146"/><line x1="1624.4" y1="363.5" x2="1682.8" y2="363.5" stroke="#5ea33f" stroke-width="1" stroke-opacity="0.2750608440135087"/><line x1="1607.9" y1="1038.7" x2="1658.2" y2="1038.7" stroke="#2f6e52" stroke-width="1" stroke-opacity="0.19106174293426778"/><line x1="1879.0" y1="710.2" x2="1879.0" y2="723.1" stroke="#5ea33f" stroke-width="1" stroke-opacity="0.31347100976753595"/><line x1="1597.0" y1="67.7" x2="1625.3" y2="67.7" stroke="#5ea33f" stroke-width="1" stroke-opacity="0.25246397835398715"/><line x1="1435.1" y1="338.1" x2="1435.1" y2="396.8" stroke="#7b7830" stroke-width="1" stroke-opacity="0.22104371740772666"/><line x1="1641.1" y1="891.4" x2="1641.1" y2="913.2" stroke="#5ea33f" stroke-width="1" stroke-opacity="0.23300439113448668"/><line x1="1526.0" y1="685.5" x2="1526.0" y2="730.1" stroke="#5ea33f" stroke-width="1" stroke-opacity="0.2770105475441055"/><line x1="1486.8" y1="655.4" x2="1486.8" y2="718.7" stroke="#7b7830" stroke-width="1" stroke-opacity="0.2225898149961661"/><line x1="1547.5" y1="86.3" x2="1547.5" y2="97.9" stroke="#5ea33f" stroke-width="1" stroke-opacity="0.269928392914187"/><line x1="1642.3" y1="150.6" x2="1655.1" y2="150.6" stroke="#5ea33f" stroke-width="1" stroke-opacity="0.24584855197471905"/><line x1="1897.3" y1="814.1" x2="1897.3" y2="824.0" stroke="#5ea33f" stroke-width="1" stroke-opacity="0.34782539989632905"/><line x1="1702.5" y1="146.2" x2="1702.5" y2="158.9" stroke="#7b7830" stroke-width="1" stroke-opacity="0.25029337200549717"/><line x1="1535.8" y1="1042.6" x2="1556.2" y2="1042.6" stroke="#2f6e52" stroke-width="1" stroke-opacity="0.33374641689892653"/><line x1="1849.2" y1="124.0" x2="1849.2" y2="174.3" stroke="#5ea33f" stroke-width="1" stroke-opacity="0.25454287788499746"/><line x1="1578.1" y1="413.7" x2="1639.9" y2="413.7" stroke="#7b7830" stroke-width="1" stroke-opacity="0.30633242519319326"/><line x1="1780.0" y1="456.2" x2="1780.0" y2="486.7" stroke="#5ea33f" stroke-width="1" stroke-opacity="0.19251598865291186"/><line x1="1613.2" y1="815.2" x2="1675.1" y2="815.2" stroke="#2f6e52" stroke-width="1" stroke-opacity="0.2525948576216618"/><line x1="1903.7" y1="77.7" x2="1956.5" y2="77.7" stroke="#2f6e52" stroke-width="1" stroke-opacity="0.3648456148440098"/><line x1="1817.9" y1="656.2" x2="1874.2" y2="656.2" stroke="#7b7830" stroke-width="1" stroke-opacity="0.1848513409883057"/><line x1="1717.0" y1="1034.7" x2="1717.0" y2="1099.9" stroke="#5ea33f" stroke-width="1" stroke-opacity="0.3379597715303999"/><line x1="1853.2" y1="171.1" x2="1853.2" y2="208.9" stroke="#7b7830" stroke-width="1" stroke-opacity="0.34051366467931304"/><line x1="1856.2" y1="841.9" x2="1900.6" y2="841.9" stroke="#2f6e52" stroke-width="1" stroke-opacity="0.3522484742396307"/><line x1="1841.6" y1="656.3" x2="1880.3" y2="656.3" stroke="#5ea33f" stroke-width="1" stroke-opacity="0.33057713413229195"/><line x1="1493.6" y1="67.5" x2="1534.7" y2="67.5" stroke="#2f6e52" stroke-width="1" stroke-opacity="0.2121384772364136"/><line x1="1523.4" y1="107.6" x2="1568.9" y2="107.6" stroke="#5ea33f" stroke-width="1" stroke-opacity="0.19928451571026484"/><line x1="1813.3" y1="500.4" x2="1813.3" y2="522.5" stroke="#5ea33f" stroke-width="1" stroke-opacity="0.2721847531502063"/><line x1="1601.4" y1="596.4" x2="1655.8" y2="596.4" stroke="#7b7830" stroke-width="1" stroke-opacity="0.33595011836420174"/><line x1="1624.8" y1="312.5" x2="1648.0" y2="312.5" stroke="#2f6e52" stroke-width="1" stroke-opacity="0.21983801817804238"/><line x1="1607.0" y1="192.7" x2="1668.0" y2="192.7" stroke="#5ea33f" stroke-width="1" stroke-opacity="0.24526758382440222"/><line x1="1917.4" y1="563.7" x2="1917.4" y2="585.6" stroke="#7b7830" stroke-width="1" stroke-opacity="0.31066531041848017"/><line x1="1521.4" y1="529.6" x2="1578.5" y2="529.6" stroke="#5ea33f" stroke-width="1" stroke-opacity="0.3628751107661073"/><line x1="1632.1" y1="156.9" x2="1651.4" y2="156.9" stroke="#5ea33f" stroke-width="1" stroke-opacity="0.36603474956023185"/><line x1="1872.1" y1="502.7" x2="1872.1" y2="526.3" stroke="#7b7830" stroke-width="1" stroke-opacity="0.20115601247170162"/><line x1="1777.8" y1="260.1" x2="1777.8" y2="290.2" stroke="#5ea33f" stroke-width="1" stroke-opacity="0.1888333058416492"/><line x1="1470.9" y1="799.4" x2="1533.7" y2="799.4" stroke="#7b7830" stroke-width="1" stroke-opacity="0.3437666215408582"/><line x1="1670.1" y1="682.8" x2="1670.1" y2="695.5" stroke="#7b7830" stroke-width="1" stroke-opacity="0.3390562336081642"/><line x1="1492.4" y1="138.3" x2="1524.1" y2="138.3" stroke="#5ea33f" stroke-width="1" stroke-opacity="0.30783638914525085"/><line x1="1560.9" y1="760.8" x2="1593.4" y2="760.8" stroke="#2f6e52" stroke-width="1" stroke-opacity="0.3135621883088287"/><line x1="1482.6" y1="813.1" x2="1482.6" y2="874.1" stroke="#5ea33f" stroke-width="1" stroke-opacity="0.26328907641502197"/><line x1="1918.8" y1="413.2" x2="1938.6" y2="413.2" stroke="#5ea33f" stroke-width="1" stroke-opacity="0.220733434173446"/><line x1="1885.0" y1="476.1" x2="1942.3" y2="476.1" stroke="#5ea33f" stroke-width="1" stroke-opacity="0.2955591322225898"/><line x1="1837.6" y1="168.2" x2="1837.6" y2="179.3" stroke="#5ea33f" stroke-width="1" stroke-opacity="0.30813333840141927"/><line x1="1512.0" y1="684.1" x2="1542.2" y2="684.1" stroke="#5ea33f" stroke-width="1" stroke-opacity="0.20917736522547145"/><line x1="1736.8" y1="1001.9" x2="1736.8" y2="1016.5" stroke="#5ea33f" stroke-width="1" stroke-opacity="0.33071116358759045"/><line x1="1849.5" y1="348.1" x2="1907.7" y2="348.1" stroke="#7b7830" stroke-width="1" stroke-opacity="0.37510931657671726"/><line x1="1484.3" y1="1002.6" x2="1484.3" y2="1033.9" stroke="#5ea33f" stroke-width="1" stroke-opacity="0.308064885416367"/><line x1="1778.2" y1="676.2" x2="1798.0" y2="676.2" stroke="#5ea33f" stroke-width="1" stroke-opacity="0.2165931087217141"/><line x1="1683.2" y1="574.8" x2="1683.2" y2="605.8" stroke="#7b7830" stroke-width="1" stroke-opacity="0.20989342845538092"/><line x1="1853.5" y1="233.8" x2="1914.6" y2="233.8" stroke="#7b7830" stroke-width="1" stroke-opacity="0.31357928520173467"/><line x1="1678.6" y1="509.6" x2="1737.5" y2="509.6" stroke="#2f6e52" stroke-width="1" stroke-opacity="0.30980557146679144"/><line x1="1609.1" y1="439.9" x2="1639.1" y2="439.9" stroke="#5ea33f" stroke-width="1" stroke-opacity="0.21575278375055681"/><line x1="1915.1" y1="519.6" x2="1915.1" y2="554.4" stroke="#5ea33f" stroke-width="1" stroke-opacity="0.34730902966792737"/><line x1="1683.4" y1="102.3" x2="1712.9" y2="102.3" stroke="#2f6e52" stroke-width="1" stroke-opacity="0.19834262878042755"/><line x1="1732.2" y1="74.7" x2="1778.3" y2="74.7" stroke="#7b7830" stroke-width="1" stroke-opacity="0.3644251986346844"/><line x1="1817.4" y1="115.8" x2="1817.4" y2="168.9" stroke="#5ea33f" stroke-width="1" stroke-opacity="0.31054913126061556"/><line x1="1458.7" y1="101.6" x2="1458.7" y2="146.4" stroke="#7b7830" stroke-width="1" stroke-opacity="0.21874146063866834"/><line x1="1724.3" y1="1034.6" x2="1724.3" y2="1097.5" stroke="#5ea33f" stroke-width="1" stroke-opacity="0.31722679136452303"/><line x1="1593.9" y1="905.0" x2="1593.9" y2="949.6" stroke="#2f6e52" stroke-width="1" stroke-opacity="0.21175348985767214"/><line x1="1622.5" y1="886.8" x2="1639.1" y2="886.8" stroke="#5ea33f" stroke-width="1" stroke-opacity="0.2216646683095213"/><line x1="1730.4" y1="366.4" x2="1730.4" y2="376.6" stroke="#5ea33f" stroke-width="1" stroke-opacity="0.26069309020225606"/><line x1="1624.2" y1="375.6" x2="1624.2" y2="406.2" stroke="#2f6e52" stroke-width="1" stroke-opacity="0.20301574016849058"/><line x1="1784.4" y1="409.0" x2="1784.4" y2="469.4" stroke="#7b7830" stroke-width="1" stroke-opacity="0.23040631889247087"/><line x1="1868.7" y1="805.3" x2="1868.7" y2="835.6" stroke="#5ea33f" stroke-width="1" stroke-opacity="0.3780996495022542"/><line x1="1664.7" y1="833.3" x2="1664.7" y2="867.9" stroke="#5ea33f" stroke-width="1" stroke-opacity="0.303074729358546"/><line x1="1633.4" y1="572.9" x2="1633.4" y2="599.5" stroke="#2f6e52" stroke-width="1" stroke-opacity="0.32660775512723766"/><line x1="1594.1" y1="336.9" x2="1594.1" y2="382.5" stroke="#5ea33f" stroke-width="1" stroke-opacity="0.28253559703245607"/><line x1="1541.2" y1="270.2" x2="1541.2" y2="317.4" stroke="#7b7830" stroke-width="1" stroke-opacity="0.1908786061445109"/><line x1="1637.1" y1="580.2" x2="1637.1" y2="620.2" stroke="#5ea33f" stroke-width="1" stroke-opacity="0.2967181839066073"/><line x1="1584.4" y1="685.9" x2="1584.4" y2="722.4" stroke="#5ea33f" stroke-width="1" stroke-opacity="0.18282240500538186"/><line x1="1812.4" y1="504.5" x2="1812.4" y2="516.3" stroke="#5ea33f" stroke-width="1" stroke-opacity="0.3542571199915894"/><line x1="1684.2" y1="308.9" x2="1684.2" y2="317.6" stroke="#2f6e52" stroke-width="1" stroke-opacity="0.29894485301614415"/><line x1="1770.5" y1="574.4" x2="1808.0" y2="574.4" stroke="#5ea33f" stroke-width="1" stroke-opacity="0.36070069402515825"/><line x1="1741.2" y1="457.5" x2="1763.5" y2="457.5" stroke="#7b7830" stroke-width="1" stroke-opacity="0.36234839257429874"/><line x1="1774.8" y1="720.3" x2="1774.8" y2="740.2" stroke="#5ea33f" stroke-width="1" stroke-opacity="0.21990365344026397"/><line x1="1730.8" y1="704.4" x2="1787.6" y2="704.4" stroke="#5ea33f" stroke-width="1" stroke-opacity="0.281715203090582"/><line x1="1780.2" y1="1073.8" x2="1831.7" y2="1073.8" stroke="#5ea33f" stroke-width="1" stroke-opacity="0.3230797227299308"/><line x1="1864.2" y1="813.0" x2="1864.2" y2="848.9" stroke="#5ea33f" stroke-width="1" stroke-opacity="0.21507834557585181"/><line x1="1615.5" y1="706.9" x2="1630.9" y2="706.9" stroke="#2f6e52" stroke-width="1" stroke-opacity="0.3223368454762293"/><line x1="1750.6" y1="489.0" x2="1750.6" y2="544.3" stroke="#2f6e52" stroke-width="1" stroke-opacity="0.2391233978301334"/><line x1="1882.3" y1="121.5" x2="1920.8" y2="121.5" stroke="#5ea33f" stroke-width="1" stroke-opacity="0.23207373038635032"/><line x1="1826.5" y1="1022.0" x2="1879.2" y2="1022.0" stroke="#2f6e52" stroke-width="1" stroke-opacity="0.21838739526296375"/><line x1="1770.2" y1="429.7" x2="1770.2" y2="488.8" stroke="#5ea33f" stroke-width="1" stroke-opacity="0.27442810392336736"/><line x1="1434.5" y1="59.8" x2="1499.9" y2="59.8" stroke="#5ea33f" stroke-width="1" stroke-opacity="0.2940680952143054"/><line x1="1588.8" y1="684.5" x2="1601.5" y2="684.5" stroke="#5ea33f" stroke-width="1" stroke-opacity="0.20891898309128523"/><line x1="1524.4" y1="1005.5" x2="1553.1" y2="1005.5" stroke="#5ea33f" stroke-width="1" stroke-opacity="0.3201479632090518"/><line x1="1545.2" y1="706.4" x2="1555.8" y2="706.4" stroke="#7b7830" stroke-width="1" stroke-opacity="0.3273570526341931"/><line x1="1765.8" y1="412.8" x2="1765.8" y2="469.9" stroke="#7b7830" stroke-width="1" stroke-opacity="0.3559429214414839"/><line x1="1813.9" y1="434.3" x2="1836.7" y2="434.3" stroke="#5ea33f" stroke-width="1" stroke-opacity="0.20239394490996096"/><line x1="1865.4" y1="883.0" x2="1911.4" y2="883.0" stroke="#2f6e52" stroke-width="1" stroke-opacity="0.27542306825500296"/><line x1="1844.7" y1="709.3" x2="1870.4" y2="709.3" stroke="#2f6e52" stroke-width="1" stroke-opacity="0.2647530771213168"/><line x1="1613.0" y1="328.2" x2="1613.0" y2="379.1" stroke="#2f6e52" stroke-width="1" stroke-opacity="0.3620668284905377"/><line x1="1770.5" y1="530.9" x2="1795.8" y2="530.9" stroke="#7b7830" stroke-width="1" stroke-opacity="0.3378111714317217"/><line x1="1735.8" y1="135.0" x2="1771.9" y2="135.0" stroke="#7b7830" stroke-width="1" stroke-opacity="0.2875761088223717"/><line x1="1870.7" y1="127.3" x2="1870.7" y2="184.4" stroke="#5ea33f" stroke-width="1" stroke-opacity="0.2672114971299455"/><line x1="1629.4" y1="818.5" x2="1640.6" y2="818.5" stroke="#2f6e52" stroke-width="1" stroke-opacity="0.27816459878636746"/><line x1="1846.5" y1="225.4" x2="1846.5" y2="263.1" stroke="#2f6e52" stroke-width="1" stroke-opacity="0.37144132261251783"/><line x1="1760.7" y1="198.5" x2="1817.6" y2="198.5" stroke="#5ea33f" stroke-width="1" stroke-opacity="0.27966312075524186"/><line x1="1784.5" y1="116.8" x2="1839.7" y2="116.8" stroke="#7b7830" stroke-width="1" stroke-opacity="0.30558644015587"/><line x1="1683.9" y1="445.5" x2="1683.9" y2="507.0" stroke="#7b7830" stroke-width="1" stroke-opacity="0.26442599905796166"/><line x1="1670.2" y1="349.7" x2="1670.2" y2="383.4" stroke="#5ea33f" stroke-width="1" stroke-opacity="0.2558610293007044"/><line x1="1600.7" y1="515.0" x2="1640.6" y2="515.0" stroke="#7b7830" stroke-width="1" stroke-opacity="0.2496970888697819"/><line x1="1555.8" y1="915.6" x2="1603.5" y2="915.6" stroke="#2f6e52" stroke-width="1" stroke-opacity="0.21391010681265166"/><line x1="1837.7" y1="639.0" x2="1837.7" y2="654.5" stroke="#5ea33f" stroke-width="1" stroke-opacity="0.3085401864128195"/><line x1="1731.1" y1="312.3" x2="1731.1" y2="365.6" stroke="#5ea33f" stroke-width="1" stroke-opacity="0.32466721885798233"/><line x1="1818.5" y1="663.8" x2="1847.4" y2="663.8" stroke="#5ea33f" stroke-width="1" stroke-opacity="0.24561501466601074"/><line x1="1911.3" y1="795.7" x2="1925.4" y2="795.7" stroke="#7b7830" stroke-width="1" stroke-opacity="0.21908640948568714"/><line x1="1551.5" y1="348.6" x2="1551.5" y2="374.5" stroke="#2f6e52" stroke-width="1" stroke-opacity="0.21923818634343006"/><line x1="1524.5" y1="248.4" x2="1524.5" y2="279.7" stroke="#7b7830" stroke-width="1" stroke-opacity="0.1825234600887017"/><line x1="1699.9" y1="265.1" x2="1766.7" y2="265.1" stroke="#2f6e52" stroke-width="1" stroke-opacity="0.2726558494897444"/><line x1="1771.2" y1="456.1" x2="1771.2" y2="508.6" stroke="#5ea33f" stroke-width="1" stroke-opacity="0.32023238357004224"/><line x1="1788.7" y1="918.6" x2="1788.7" y2="966.7" stroke="#5ea33f" stroke-width="1" stroke-opacity="0.31591930446252964"/><line x1="1707.6" y1="360.0" x2="1753.3" y2="360.0" stroke="#7b7830" stroke-width="1" stroke-opacity="0.35894884559449614"/><line x1="1683.3" y1="778.8" x2="1700.7" y2="778.8" stroke="#5ea33f" stroke-width="1" stroke-opacity="0.2765487188923277"/><line x1="1869.4" y1="575.1" x2="1917.0" y2="575.1" stroke="#5ea33f" stroke-width="1" stroke-opacity="0.3588988838411714"/><line x1="1440.8" y1="903.8" x2="1440.8" y2="966.3" stroke="#7b7830" stroke-width="1" stroke-opacity="0.18762910582307443"/><line x1="1559.1" y1="851.3" x2="1559.1" y2="915.8" stroke="#2f6e52" stroke-width="1" stroke-opacity="0.20021739907139463"/><line x1="1745.3" y1="783.7" x2="1784.0" y2="783.7" stroke="#2f6e52" stroke-width="1" stroke-opacity="0.2843376540286121"/><line x1="1901.6" y1="252.2" x2="1901.6" y2="301.2" stroke="#5ea33f" stroke-width="1" stroke-opacity="0.28275841916010025"/><line x1="1820.8" y1="675.5" x2="1867.1" y2="675.5" stroke="#2f6e52" stroke-width="1" stroke-opacity="0.23487144348299008"/><line x1="1444.3" y1="470.7" x2="1477.5" y2="470.7" stroke="#2f6e52" stroke-width="1" stroke-opacity="0.2960350505488477"/><line x1="1637.0" y1="451.7" x2="1637.0" y2="516.9" stroke="#5ea33f" stroke-width="1" stroke-opacity="0.3788460508011093"/><line x1="1711.3" y1="204.4" x2="1711.3" y2="268.2" stroke="#7b7830" stroke-width="1" stroke-opacity="0.3419144824123287"/><line x1="1714.4" y1="621.0" x2="1714.4" y2="642.6" stroke="#5ea33f" stroke-width="1" stroke-opacity="0.25062634328907396"/><line x1="1854.7" y1="887.4" x2="1854.7" y2="923.4" stroke="#2f6e52" stroke-width="1" stroke-opacity="0.33197758607308225"/><line x1="1840.1" y1="523.9" x2="1895.1" y2="523.9" stroke="#5ea33f" stroke-width="1" stroke-opacity="0.2334848968747263"/><line x1="1611.3" y1="478.6" x2="1611.3" y2="497.7" stroke="#7b7830" stroke-width="1" stroke-opacity="0.34108731436996076"/><line x1="1663.6" y1="717.8" x2="1663.6" y2="745.0" stroke="#5ea33f" stroke-width="1" stroke-opacity="0.2656986546864568"/><line x1="1793.5" y1="411.8" x2="1793.5" y2="475.6" stroke="#5ea33f" stroke-width="1" stroke-opacity="0.19141257447791088"/><line x1="1886.5" y1="853.7" x2="1903.0" y2="853.7" stroke="#2f6e52" stroke-width="1" stroke-opacity="0.3066324647999634"/><line x1="1441.9" y1="1029.5" x2="1441.9" y2="1076.8" stroke="#2f6e52" stroke-width="1" stroke-opacity="0.3016401176177143"/><line x1="1867.8" y1="226.6" x2="1902.9" y2="226.6" stroke="#5ea33f" stroke-width="1" stroke-opacity="0.2217081831456531"/><line x1="1742.5" y1="670.8" x2="1742.5" y2="720.1" stroke="#7b7830" stroke-width="1" stroke-opacity="0.3136915849173705"/><line x1="1843.2" y1="911.1" x2="1843.2" y2="930.9" stroke="#5ea33f" stroke-width="1" stroke-opacity="0.28615909558328245"/><line x1="1700.8" y1="957.1" x2="1700.8" y2="998.4" stroke="#2f6e52" stroke-width="1" stroke-opacity="0.2638076296957966"/><line x1="1716.2" y1="615.9" x2="1753.2" y2="615.9" stroke="#5ea33f" stroke-width="1" stroke-opacity="0.32008432550932797"/><line x1="1561.4" y1="660.4" x2="1613.5" y2="660.4" stroke="#5ea33f" stroke-width="1" stroke-opacity="0.34815350252491833"/><line x1="1754.3" y1="729.2" x2="1754.3" y2="787.7" stroke="#2f6e52" stroke-width="1" stroke-opacity="0.26516282799663665"/><line x1="1800.1" y1="221.2" x2="1829.7" y2="221.2" stroke="#7b7830" stroke-width="1" stroke-opacity="0.1841119539881875"/><line x1="1823.7" y1="1078.9" x2="1880.2" y2="1078.9" stroke="#7b7830" stroke-width="1" stroke-opacity="0.2821251164140871"/><line x1="1883.6" y1="67.5" x2="1883.6" y2="118.6" stroke="#5ea33f" stroke-width="1" stroke-opacity="0.24772131039867595"/><line x1="1667.5" y1="529.3" x2="1707.0" y2="529.3" stroke="#5ea33f" stroke-width="1" stroke-opacity="0.23683021163223614"/><line x1="1610.3" y1="87.3" x2="1635.6" y2="87.3" stroke="#2f6e52" stroke-width="1" stroke-opacity="0.34554681434293133"/><line x1="1729.4" y1="316.7" x2="1729.4" y2="355.1" stroke="#5ea33f" stroke-width="1" stroke-opacity="0.3109118308010592"/><line x1="1650.5" y1="364.3" x2="1676.5" y2="364.3" stroke="#7b7830" stroke-width="1" stroke-opacity="0.3368431109137773"/><line x1="1818.3" y1="960.1" x2="1859.0" y2="960.1" stroke="#7b7830" stroke-width="1" stroke-opacity="0.2596964173024988"/><rect x="1462.3" y="886.6" width="16.5" height="22.9" rx="0" fill="none" stroke="#7b7830" stroke-width="1" stroke-opacity="0.3183540480220796"/><rect x="1876.7" y="670.1" width="19.6" height="19.8" rx="0" fill="none" stroke="#7b7830" stroke-width="1" stroke-opacity="0.23187520880938417"/><rect x="1760.2" y="511.6" width="22.8" height="8.2" rx="0" fill="none" stroke="#7b7830" stroke-width="1" stroke-opacity="0.33038087714870756"/><rect x="1642.4" y="143.6" width="26.5" height="6.3" rx="0" fill="none" stroke="#7b7830" stroke-width="1" stroke-opacity="0.317981007295861"/><rect x="1709.8" y="305.7" width="12.6" height="15.3" rx="0" fill="none" stroke="#5ea33f" stroke-width="1" stroke-opacity="0.20305880840570673"/><rect x="1711.8" y="635.6" width="26.1" height="17.0" rx="0" fill="none" stroke="#7b7830" stroke-width="1" stroke-opacity="0.3237134364830482"/><rect x="1811.4" y="473.7" width="21.3" height="14.9" rx="0" fill="none" stroke="#7b7830" stroke-width="1" stroke-opacity="0.20211956726010452"/><rect x="1625.8" y="649.7" width="26.6" height="27.6" rx="0" fill="none" stroke="#5ea33f" stroke-width="1" stroke-opacity="0.315482996865083"/><rect x="1703.4" y="125.4" width="16.4" height="25.7" rx="0" fill="none" stroke="#7b7830" stroke-width="1" stroke-opacity="0.2640499699914268"/><rect x="1444.5" y="729.4" width="27.7" height="24.9" rx="0" fill="none" stroke="#7b7830" stroke-width="1" stroke-opacity="0.33043237230332284"/><rect x="1501.9" y="58.3" width="21.8" height="11.3" rx="0" fill="none" stroke="#7b7830" stroke-width="1" stroke-opacity="0.3384204745853007"/><rect x="1615.6" y="809.7" width="21.3" height="9.2" rx="0" fill="none" stroke="#7b7830" stroke-width="1" stroke-opacity="0.24397149603287482"/><rect x="1707.6" y="553.0" width="20.7" height="25.6" rx="0" fill="none" stroke="#7b7830" stroke-width="1" stroke-opacity="0.30758151601847494"/><rect x="1445.5" y="55.2" width="20.3" height="24.0" rx="0" fill="none" stroke="#7b7830" stroke-width="1" stroke-opacity="0.2583423033107772"/><rect x="1590.0" y="658.1" width="27.1" height="24.4" rx="0" fill="none" stroke="#7b7830" stroke-width="1" stroke-opacity="0.24744192440163224"/><rect x="1895.4" y="789.6" width="16.3" height="9.7" rx="0" fill="none" stroke="#7b7830" stroke-width="1" stroke-opacity="0.2544898393979958"/><rect x="1749.5" y="688.6" width="15.2" height="14.5" rx="0" fill="none" stroke="#5ea33f" stroke-width="1" stroke-opacity="0.3417382913887286"/><rect x="1816.6" y="623.8" width="12.4" height="7.3" rx="0" fill="none" stroke="#5ea33f" stroke-width="1" stroke-opacity="0.3304337318306674"/><rect x="1788.3" y="56.0" width="9.3" height="24.3" rx="0" fill="none" stroke="#5ea33f" stroke-width="1" stroke-opacity="0.3464581294597581"/><rect x="1558.1" y="439.0" width="14.3" height="23.0" rx="0" fill="none" stroke="#7b7830" stroke-width="1" stroke-opacity="0.32112221619256154"/><rect x="1576.0" y="41.7" width="11.8" height="15.3" rx="0" fill="none" stroke="#7b7830" stroke-width="1" stroke-opacity="0.2432782167567659"/><rect x="1507.5" y="957.3" width="27.8" height="9.2" rx="0" fill="none" stroke="#5ea33f" stroke-width="1" stroke-opacity="0.25202798679607813"/><rect x="1480.8" y="610.3" width="23.5" height="10.4" rx="0" fill="none" stroke="#7b7830" stroke-width="1" stroke-opacity="0.2464205584752167"/><rect x="1467.6" y="447.4" width="21.6" height="26.4" rx="0" fill="none" stroke="#7b7830" stroke-width="1" stroke-opacity="0.3187497463654437"/><rect x="1660.7" y="130.3" width="23.7" height="23.0" rx="0" fill="none" stroke="#7b7830" stroke-width="1" stroke-opacity="0.25972798196180585"/><rect x="1690.1" y="307.3" width="24.3" height="13.1" rx="0" fill="none" stroke="#7b7830" stroke-width="1" stroke-opacity="0.2283727134160999"/><rect x="1532.3" y="226.1" width="21.4" height="14.0" rx="0" fill="none" stroke="#5ea33f" stroke-width="1" stroke-opacity="0.260373693830861"/><rect x="1688.3" y="193.5" width="7.0" height="27.9" rx="0" fill="none" stroke="#5ea33f" stroke-width="1" stroke-opacity="0.3299557716840337"/><rect x="1618.4" y="517.3" width="7.8" height="12.9" rx="0" fill="none" stroke="#7b7830" stroke-width="1" stroke-opacity="0.2517382487064765"/><rect x="1689.3" y="61.2" width="6.7" height="27.8" rx="0" fill="none" stroke="#5ea33f" stroke-width="1" stroke-opacity="0.2880066445848166"/><rect x="1542.5" y="993.3" width="12.2" height="8.1" rx="0" fill="none" stroke="#5ea33f" stroke-width="1" stroke-opacity="0.3150873444152476"/><rect x="1833.0" y="1032.4" width="11.6" height="6.8" rx="0" fill="none" stroke="#7b7830" stroke-width="1" stroke-opacity="0.34919215125672753"/><rect x="1621.5" y="68.3" width="6.8" height="14.1" rx="0" fill="none" stroke="#5ea33f" stroke-width="1" stroke-opacity="0.2730253207838592"/><rect x="1845.9" y="961.6" width="25.0" height="20.1" rx="0" fill="none" stroke="#7b7830" stroke-width="1" stroke-opacity="0.3059564549021012"/><rect x="1483.2" y="368.3" width="11.1" height="8.0" rx="0" fill="none" stroke="#5ea33f" stroke-width="1" stroke-opacity="0.2274005425516629"/><rect x="1847.9" y="422.0" width="11.2" height="21.9" rx="0" fill="none" stroke="#7b7830" stroke-width="1" stroke-opacity="0.2057947504614074"/><rect x="1562.8" y="402.6" width="25.9" height="25.9" rx="0" fill="none" stroke="#7b7830" stroke-width="1" stroke-opacity="0.23868548697200406"/><rect x="1686.4" y="801.8" width="22.8" height="16.6" rx="0" fill="none" stroke="#7b7830" stroke-width="1" stroke-opacity="0.2217196348879664"/><rect x="1802.4" y="1007.6" width="20.9" height="12.6" rx="0" fill="none" stroke="#5ea33f" stroke-width="1" stroke-opacity="0.3136846698662439"/><rect x="1490.6" y="373.6" width="11.7" height="8.7" rx="0" fill="none" stroke="#5ea33f" stroke-width="1" stroke-opacity="0.2569469096160425"/><rect x="1651.9" y="871.8" width="26.1" height="25.6" rx="0" fill="none" stroke="#5ea33f" stroke-width="1" stroke-opacity="0.30758400698667787"/><rect x="1533.6" y="77.1" width="26.4" height="10.9" rx="0" fill="none" stroke="#5ea33f" stroke-width="1" stroke-opacity="0.33330613309415613"/><rect x="1507.1" y="500.7" width="8.1" height="26.4" rx="0" fill="none" stroke="#7b7830" stroke-width="1" stroke-opacity="0.2942555964832984"/><rect x="1657.1" y="390.0" width="24.1" height="16.5" rx="0" fill="none" stroke="#5ea33f" stroke-width="1" stroke-opacity="0.22141518294659898"/><rect x="1546.4" y="98.4" width="21.7" height="18.2" rx="0" fill="none" stroke="#7b7830" stroke-width="1" stroke-opacity="0.2658456540153062"/><rect x="1511.7" y="470.8" width="11.4" height="6.6" rx="0" fill="none" stroke="#5ea33f" stroke-width="1" stroke-opacity="0.2501763285742824"/><rect x="1520.5" y="545.7" width="13.0" height="25.9" rx="0" fill="none" stroke="#7b7830" stroke-width="1" stroke-opacity="0.22300535475308647"/><rect x="1686.5" y="689.9" width="23.3" height="26.4" rx="0" fill="none" stroke="#5ea33f" stroke-width="1" stroke-opacity="0.32529234359364934"/><rect x="1497.2" y="817.5" width="27.4" height="15.5" rx="0" fill="none" stroke="#5ea33f" stroke-width="1" stroke-opacity="0.34971284408719283"/><rect x="1884.0" y="140.5" width="12.4" height="25.7" rx="0" fill="none" stroke="#7b7830" stroke-width="1" stroke-opacity="0.3248484787268261"/><rect x="1909.7" y="188.7" width="20.1" height="15.7" rx="0" fill="none" stroke="#5ea33f" stroke-width="1" stroke-opacity="0.2766176638828331"/><rect x="1652.6" y="853.3" width="26.8" height="12.3" rx="0" fill="none" stroke="#5ea33f" stroke-width="1" stroke-opacity="0.26528740716041765"/><rect x="1877.8" y="264.8" width="18.6" height="9.0" rx="0" fill="none" stroke="#7b7830" stroke-width="1" stroke-opacity="0.2782479101089154"/><rect x="1550.6" y="220.9" width="19.2" height="24.2" rx="0" fill="none" stroke="#5ea33f" stroke-width="1" stroke-opacity="0.31419194892855934"/><rect x="1524.2" y="181.2" width="20.7" height="19.8" rx="0" fill="none" stroke="#7b7830" stroke-width="1" stroke-opacity="0.2874399650559325"/><rect x="1537.1" y="107.7" width="22.1" height="15.0" rx="0" fill="none" stroke="#7b7830" stroke-width="1" stroke-opacity="0.277768877682068"/><rect x="1606.9" y="330.2" width="20.1" height="26.8" rx="0" fill="none" stroke="#7b7830" stroke-width="1" stroke-opacity="0.2023167707877421"/><rect x="1876.9" y="530.9" width="25.2" height="11.9" rx="0" fill="none" stroke="#7b7830" stroke-width="1" stroke-opacity="0.2844691408778982"/><rect x="1913.1" y="77.8" width="21.4" height="18.6" rx="0" fill="none" stroke="#7b7830" stroke-width="1" stroke-opacity="0.25342353230695014"/><rect x="1887.4" y="1037.8" width="7.6" height="13.8" rx="0" fill="none" stroke="#7b7830" stroke-width="1" stroke-opacity="0.3224803285636513"/><circle cx="1855.4" cy="370.6" r="6.555932189080545" fill="none" stroke="#5ea33f" stroke-width="1" stroke-opacity="0.3"/><circle cx="1716.6" cy="965.0" r="4.457708324223882" fill="none" stroke="#7b7830" stroke-width="1" stroke-opacity="0.3"/><circle cx="1897.9" cy="549.6" r="5.566570342542299" fill="none" stroke="#7b7830" stroke-width="1" stroke-opacity="0.3"/><circle cx="1449.9" cy="1036.4" r="4.1184949285939" fill="none" stroke="#7b7830" stroke-width="1" stroke-opacity="0.3"/><circle cx="1520.6" cy="361.3" r="5.776801169557634" fill="none" stroke="#7b7830" stroke-width="1" stroke-opacity="0.3"/><circle cx="1449.3" cy="994.1" r="6.693743020112996" fill="none" stroke="#5ea33f" stroke-width="1" stroke-opacity="0.3"/><circle cx="1448.5" cy="657.4" r="5.882412652073059" fill="none" stroke="#7b7830" stroke-width="1" stroke-opacity="0.3"/><circle cx="1777.3" cy="146.0" r="7.347630630951608" fill="none" stroke="#7b7830" stroke-width="1" stroke-opacity="0.3"/><circle cx="1461.7" cy="166.7" r="5.467959545027542" fill="none" stroke="#5ea33f" stroke-width="1" stroke-opacity="0.3"/><circle cx="1492.8" cy="165.2" r="7.4221897846815965" fill="none" stroke="#7b7830" stroke-width="1" stroke-opacity="0.3"/><circle cx="1853.3" cy="191.6" r="5.864207121061337" fill="none" stroke="#5ea33f" stroke-width="1" stroke-opacity="0.3"/><circle cx="1518.9" cy="890.8" r="7.687904813699106" fill="none" stroke="#5ea33f" stroke-width="1" stroke-opacity="0.3"/><circle cx="1773.1" cy="655.0" r="6.013951127440312" fill="none" stroke="#7b7830" stroke-width="1" stroke-opacity="0.3"/><circle cx="1629.9" cy="1009.5" r="6.884535668911587" fill="none" stroke="#5ea33f" stroke-width="1" stroke-opacity="0.3"/><circle cx="1632.3" cy="903.7" r="6.577642792298715" fill="none" stroke="#5ea33f" stroke-width="1" stroke-opacity="0.3"/><circle cx="1831.2" cy="913.1" r="3.2677658693820146" fill="none" stroke="#7b7830" stroke-width="1" stroke-opacity="0.3"/><circle cx="1899.8" cy="1002.4" r="4.24642222637298" fill="none" stroke="#5ea33f" stroke-width="1" stroke-opacity="0.3"/><circle cx="1758.3" cy="51.9" r="3.5451273743360607" fill="none" stroke="#7b7830" stroke-width="1" stroke-opacity="0.3"/><circle cx="1473.2" cy="486.0" r="5.523873287034793" fill="none" stroke="#7b7830" stroke-width="1" stroke-opacity="0.3"/><circle cx="1548.2" cy="473.3" r="4.98525819095148" fill="none" stroke="#5ea33f" stroke-width="1" stroke-opacity="0.3"/><circle cx="1743.9" cy="873.5" r="7.421864821511997" fill="none" stroke="#7b7830" stroke-width="1" stroke-opacity="0.3"/><circle cx="1456.5" cy="700.8" r="4.328859996718515" fill="none" stroke="#5ea33f" stroke-width="1" stroke-opacity="0.3"/><circle cx="1741.6" cy="870.5" r="3.178893268900282" fill="none" stroke="#7b7830" stroke-width="1" stroke-opacity="0.3"/><circle cx="1560.3" cy="575.9" r="5.168456362063152" fill="none" stroke="#7b7830" stroke-width="1" stroke-opacity="0.3"/><circle cx="1578.0" cy="354.6" r="6.237600481770122" fill="none" stroke="#7b7830" stroke-width="1" stroke-opacity="0.3"/><circle cx="1469.0" cy="1027.9" r="7.605287518865573" fill="none" stroke="#5ea33f" stroke-width="1" stroke-opacity="0.3"/><circle cx="1480.5" cy="648.0" r="7.659630140230332" fill="none" stroke="#5ea33f" stroke-width="1" stroke-opacity="0.3"/><circle cx="1499.5" cy="175.3" r="4.467997316851771" fill="none" stroke="#5ea33f" stroke-width="1" stroke-opacity="0.3"/><circle cx="1717.1" cy="322.3" r="6.679654228979619" fill="none" stroke="#5ea33f" stroke-width="1" stroke-opacity="0.3"/><circle cx="1843.1" cy="668.3" r="5.850896165580155" fill="none" stroke="#5ea33f" stroke-width="1" stroke-opacity="0.3"/><line x1="1080.5" y1="771.7" x2="1080.5" y2="828.5" stroke="#2f6e52" stroke-width="1" stroke-opacity="0.2"/><line x1="1245.1" y1="523.0" x2="1290.0" y2="523.0" stroke="#2f6e52" stroke-width="1" stroke-opacity="0.2"/><line x1="1088.6" y1="567.8" x2="1088.6" y2="618.5" stroke="#2f6e52" stroke-width="1" stroke-opacity="0.2"/><line x1="1004.8" y1="403.2" x2="1093.7" y2="403.2" stroke="#2f6e52" stroke-width="1" stroke-opacity="0.2"/><line x1="1222.7" y1="546.1" x2="1222.7" y2="588.9" stroke="#2f6e52" stroke-width="1" stroke-opacity="0.2"/><line x1="1118.2" y1="835.3" x2="1150.9" y2="835.3" stroke="#2f6e52" stroke-width="1" stroke-opacity="0.2"/><line x1="1348.5" y1="493.2" x2="1373.5" y2="493.2" stroke="#2f6e52" stroke-width="1" stroke-opacity="0.2"/><line x1="1176.0" y1="797.5" x2="1204.7" y2="797.5" stroke="#2f6e52" stroke-width="1" stroke-opacity="0.2"/><line x1="1383.7" y1="800.8" x2="1416.1" y2="800.8" stroke="#2f6e52" stroke-width="1" stroke-opacity="0.2"/><line x1="1141.0" y1="735.6" x2="1141.0" y2="804.9" stroke="#2f6e52" stroke-width="1" stroke-opacity="0.2"/><line x1="1328.5" y1="573.3" x2="1328.5" y2="652.4" stroke="#2f6e52" stroke-width="1" stroke-opacity="0.2"/><line x1="1303.9" y1="529.5" x2="1303.9" y2="612.3" stroke="#2f6e52" stroke-width="1" stroke-opacity="0.2"/><line x1="1365.9" y1="171.1" x2="1455.5" y2="171.1" stroke="#2f6e52" stroke-width="1" stroke-opacity="0.2"/><line x1="1306.3" y1="643.4" x2="1306.3" y2="703.2" stroke="#2f6e52" stroke-width="1" stroke-opacity="0.2"/><line x1="1228.8" y1="470.4" x2="1228.8" y2="553.1" stroke="#2f6e52" stroke-width="1" stroke-opacity="0.2"/><line x1="1242.9" y1="430.9" x2="1299.1" y2="430.9" stroke="#2f6e52" stroke-width="1" stroke-opacity="0.2"/><line x1="1289.2" y1="341.7" x2="1289.2" y2="393.0" stroke="#2f6e52" stroke-width="1" stroke-opacity="0.2"/><line x1="1153.8" y1="371.7" x2="1153.8" y2="454.6" stroke="#2f6e52" stroke-width="1" stroke-opacity="0.2"/><line x1="1199.8" y1="497.4" x2="1234.6" y2="497.4" stroke="#2f6e52" stroke-width="1" stroke-opacity="0.2"/><line x1="1058.0" y1="632.7" x2="1124.5" y2="632.7" stroke="#2f6e52" stroke-width="1" stroke-opacity="0.2"/><line x1="1368.1" y1="373.6" x2="1368.1" y2="461.1" stroke="#2f6e52" stroke-width="1" stroke-opacity="0.2"/><line x1="1383.5" y1="250.4" x2="1383.5" y2="304.6" stroke="#2f6e52" stroke-width="1" stroke-opacity="0.2"/><line x1="1004.3" y1="88.9" x2="1069.5" y2="88.9" stroke="#2f6e52" stroke-width="1" stroke-opacity="0.2"/><line x1="1368.1" y1="836.7" x2="1368.1" y2="899.8" stroke="#2f6e52" stroke-width="1" stroke-opacity="0.2"/><line x1="1207.0" y1="572.8" x2="1281.8" y2="572.8" stroke="#2f6e52" stroke-width="1" stroke-opacity="0.2"/><line x1="1143.1" y1="652.6" x2="1143.1" y2="700.7" stroke="#2f6e52" stroke-width="1" stroke-opacity="0.2"/><line x1="1270.6" y1="581.0" x2="1298.5" y2="581.0" stroke="#2f6e52" stroke-width="1" stroke-opacity="0.2"/><line x1="1160.4" y1="618.2" x2="1160.4" y2="684.1" stroke="#2f6e52" stroke-width="1" stroke-opacity="0.2"/><line x1="1385.8" y1="541.3" x2="1385.8" y2="596.5" stroke="#2f6e52" stroke-width="1" stroke-opacity="0.2"/><line x1="1398.4" y1="393.6" x2="1398.4" y2="456.0" stroke="#2f6e52" stroke-width="1" stroke-opacity="0.2"/><line x1="1068.3" y1="367.6" x2="1068.3" y2="465.9" stroke="#2f6e52" stroke-width="1" stroke-opacity="0.2"/><line x1="1205.0" y1="153.8" x2="1205.0" y2="245.4" stroke="#2f6e52" stroke-width="1" stroke-opacity="0.2"/><line x1="1328.2" y1="1060.0" x2="1419.3" y2="1060.0" stroke="#2f6e52" stroke-width="1" stroke-opacity="0.2"/><line x1="1062.6" y1="338.6" x2="1062.6" y2="399.6" stroke="#2f6e52" stroke-width="1" stroke-opacity="0.2"/><line x1="1075.2" y1="227.9" x2="1075.2" y2="298.3" stroke="#2f6e52" stroke-width="1" stroke-opacity="0.2"/><line x1="1141.3" y1="1063.6" x2="1212.2" y2="1063.6" stroke="#2f6e52" stroke-width="1" stroke-opacity="0.2"/><line x1="1164.6" y1="851.3" x2="1164.6" y2="895.8" stroke="#2f6e52" stroke-width="1" stroke-opacity="0.2"/><line x1="1001.6" y1="353.6" x2="1001.6" y2="441.0" stroke="#2f6e52" stroke-width="1" stroke-opacity="0.2"/><line x1="1267.2" y1="242.5" x2="1267.2" y2="302.4" stroke="#2f6e52" stroke-width="1" stroke-opacity="0.2"/><line x1="1106.4" y1="706.2" x2="1106.4" y2="768.7" stroke="#2f6e52" stroke-width="1" stroke-opacity="0.2"/><path d="M1431 226 L1447 208 L1463 226" fill="#6d6a35" fill-opacity="0.6"/><circle cx="1447" cy="230" r="12" fill="none" stroke="#7b7830" stroke-width="1" stroke-opacity="0.4"/><path d="M1431 663 L1447 645 L1463 663" fill="#6d6a35" fill-opacity="0.6"/><circle cx="1447" cy="667" r="12" fill="none" stroke="#7b7830" stroke-width="1" stroke-opacity="0.4"/><path d="M1431 853 L1447 835 L1463 853" fill="#6d6a35" fill-opacity="0.6"/><circle cx="1447" cy="857" r="12" fill="none" stroke="#7b7830" stroke-width="1" stroke-opacity="0.4"/></svg></div>
<div id="topbar">
  <div class="t" style="left:18px;top:9px;font-size:15px;">Activities</div>
  <svg class="abs" style="left:116px;top:4px" width="24" height="24" viewBox="0 0 24 24">
    <g fill="#e0e0e0">
      <circle cx="12" cy="12" r="6"/>
      <rect x="11.2" y="3.8" width="1.6" height="1"/>
      <rect x="6" y="6" width="1" height="1"/><rect x="17" y="6" width="1" height="1"/>
      <rect x="4" y="11.2" width="1" height="1.6"/><rect x="19" y="11.2" width="1" height="1.6"/>
      <rect x="6" y="16.6" width="1" height="1.2"/>
    </g>
    <path d="M8.3 19.2 Q7.8 16.4 10.4 15.8 Q12 12.8 15.2 13.2 Q18 13.8 18.2 16.3 Q20.2 16.8 20.2 19.2 Z" fill="#000" stroke="#000" stroke-width="1.4"/>
    <path d="M8.3 19.2 Q7.8 16.4 10.4 15.8 Q12 12.8 15.2 13.2 Q18 13.8 18.2 16.3 Q20.2 16.8 20.2 19.2 Z" fill="#e0e0e0"/>
  </svg>
  <div class="t" style="left:143px;top:10px;font-size:14px;letter-spacing:1.2px;">Weather</div>
  <div class="t" style="left:914px;top:11px;font-size:14px;letter-spacing:0.4px;">Jun</div>
  <div class="t" style="left:944px;top:11px;font-size:14px;">9</div>
  <div class="t" style="left:959px;top:11px;font-size:14px;letter-spacing:0.3px;">22</div>
  <div class="abs" style="left:981px;top:12px;width:2px;height:2px;background:#e6e6e6;"></div>
  <div class="abs" style="left:981px;top:19px;width:2px;height:2px;background:#e6e6e6;"></div>
  <div class="t" style="left:990px;top:11px;font-size:14px;letter-spacing:0.3px;">28</div>
  <svg class="abs" style="left:1830px;top:6px" width="80" height="22" viewBox="0 0 80 22">
    <path d="M9 4 L15 6.2 L15 10.5 Q15 14.5 9 16.5 Q3 14.5 3 10.5 L3 6.2 Z" fill="#e0e0e0"/>
    <circle cx="9" cy="9.3" r="1.8" fill="#000"/><rect x="8.2" y="9.5" width="1.6" height="3.6" fill="#000"/>
    <rect x="31" y="8.2" width="1" height="3.6" fill="#e0e0e0"/>
    <path d="M32.5 8 L35.5 8 L38.5 4.5 L38.5 15.5 L35.5 12 L32.5 12 Z" fill="#e0e0e0"/>
    <path d="M40.3 7 Q42 10 40.3 13" stroke="#9a9a9a" stroke-width="1" fill="none"/>
    <path d="M41.8 5.5 Q44.5 10 41.8 14.5" stroke="#7a7a7a" stroke-width="1" fill="none"/>
    <rect x="61" y="2" width="8" height="2.6" fill="#e0e0e0"/>
    <rect x="59.8" y="4.8" width="10.4" height="12.6" fill="none" stroke="#e0e0e0" stroke-width="1.6"/>
    <path d="M66.2 6.5 L68.6 6.5 L66.6 10.6 L68.6 10.6 L63.4 17.2 L65 12.4 L62.4 12.4 Z" fill="#e0e0e0"/>
  </svg>
</div>
<div id="win">
  <div id="hdr">
    <svg class="abs" style="left:12px;top:18px" width="18" height="18" viewBox="0 0 18 18">
      <path d="M6 2.7 L7.5 2.6 A5.6 5.6 0 0 1 14.2 10 M11.9 8.1 L14.3 10.4" fill="none" stroke="#eeeeec" stroke-width="1.25"/>
      <path d="M12 13.3 L10.5 13.4 A5.6 5.6 0 0 1 3.8 6 M6.1 7.9 L3.7 5.6" fill="none" stroke="#eeeeec" stroke-width="1.25"/>
    </svg>
    <svg class="abs" style="left:300px;top:14px" width="22" height="22" viewBox="0 0 22 22">
      <circle cx="10.5" cy="10.3" r="6.2" fill="none" stroke="#2a2e32" stroke-width="1.5" opacity="0.8"/>
      <path d="M7 6.8 L10.6 10.2 L14 10.2" fill="none" stroke="#2a2e32" stroke-width="1.2" opacity="0.8"/>
    </svg>
    <div class="t" style="left:329px;top:20px;font-size:14px;color:#2a2e32;opacity:0.8;">Hourly</div>
    <svg class="abs" style="left:408px;top:17px" width="16" height="16" viewBox="0 0 16 16">
      <rect x="1" y="1" width="14" height="13.8" rx="2" fill="#26292d"/>
      <g fill="#474e57">
        <rect x="3" y="5" width="2" height="2"/><rect x="6" y="5" width="2" height="2"/><rect x="9" y="5" width="2" height="2"/><rect x="12" y="5" width="1.5" height="2"/>
        <rect x="3" y="8" width="2" height="2"/><rect x="6" y="8" width="2" height="2"/><rect x="9" y="8" width="2" height="2"/><rect x="12" y="8" width="1.5" height="2"/>
        <rect x="3" y="11" width="2" height="2"/><rect x="6" y="11" width="2" height="2"/><rect x="9" y="11" width="2" height="2"/><rect x="12" y="11" width="1.5" height="2"/>
      </g>
    </svg>
    <div class="t" style="left:432px;top:19px;font-size:14px;font-weight:700;color:#26292d;">Daily</div>
    <div class="abs" style="left:0;top:51px;width:783px;height:1px;background:#41474f;"></div>
    <div class="abs" style="left:391px;top:49px;width:100px;height:3px;background:#3daee9;"></div>
    <div class="abs" style="left:671px;top:21px;width:12px;height:2px;background:#fff;"></div>
    <div class="abs" style="left:671px;top:25px;width:12px;height:2px;background:#fff;"></div>
    <div class="abs" style="left:671px;top:29px;width:12px;height:2px;background:#fff;"></div>
    <svg class="abs" style="left:700px;top:14px" width="80" height="24" viewBox="0 0 80 24">
      <path d="M10 9 L15 14.3 L20 9" fill="none" stroke="#eeeeec" stroke-width="1.3"/>
      <path d="M35.8 14.5 L41 9.3 L46.2 14.5" fill="none" stroke="#eeeeec" stroke-width="1.3"/>
      <path d="M62.8 8 L71.3 16.3 M71.3 8 L62.8 16.3" fill="none" stroke="#eeeeec" stroke-width="1.3"/>
    </svg>
  </div>
  <svg class="abs" style="left:27px;top:68px" width="100" height="100" viewBox="650 296 100 100">
    <defs><mask id="mm"><rect x="600" y="280" width="200" height="200" fill="#fff"/><circle cx="726.5" cy="331.5" r="29.5" fill="#000"/></mask></defs>
    <circle cx="695.7" cy="345" r="38.7" fill="#f0c32c" mask="url(#mm)"/>
    <circle cx="696.3" cy="344.3" r="37.6" fill="#f8ee70" mask="url(#mm)"/>
    <path d="M725 305.3 L727.5 314.1 L736.6 316.6 L727.5 319.1 L725 328 L722.5 319.1 L713.4 316.6 L722.5 314.1 Z" fill="#f3c21f"/>
    <path d="M725 305.3 L727.5 314.1 L736.6 316.6 L725 316.6 Z" fill="#f9e37c"/>
    <path d="M715.6 329.8 L717.4 335.9 L724 337.7 L717.4 339.5 L715.6 345.6 L713.8 339.5 L707.2 337.7 L713.8 335.9 Z" fill="#f3c21f"/>
    <path d="M715.6 329.8 L717.4 335.9 L724 337.7 L715.6 337.7 Z" fill="#f9e37c"/>
  </svg>
  <div class="abs" style="left:0;top:52px;width:783px;height:1px;background:#c6c8cb;"></div>
  <div class="t" style="left:132px;top:82px;font-size:14px;font-weight:700;color:#232629;">Bavaria, Germany</div>
  <svg class="abs" style="left:267px;top:85px" width="10" height="6" viewBox="0 0 10 6"><path d="M0 0.3 L10 0.3 L5 5.5 Z" fill="#232629"/></svg>
  <div class="t" style="left:140px;top:115px;font-size:42px;font-weight:700;color:#232629;letter-spacing:1.5px;-webkit-text-stroke:0.7px #232629;">15</div>
  <div class="abs" style="left:192px;top:119px;width:8px;height:8px;border:4px solid #232629;border-radius:50%;"></div>
  <div class="t" style="left:217px;top:140px;font-size:12px;color:#232629;">Feels like 15°</div>
  <div class="frame"><div class="day" style="left:0px;top:22px;">Fri</div><div class="date" style="left:0px;top:46px;">Jun 10</div><div class="icw" style="left:0;top:74px;"><svg class="ic" style="left:19px;top:0" width="60" height="60" viewBox="-30.5 0 60 60"><circle cx="-1.6" cy="19.85" r="8" fill="#f6d32d"/><rect x="-3.5" y="6" width="4" height="4" rx="0.6" fill="#f6d32d"/><rect x="-15.5" y="18" width="4" height="4" rx="0.6" fill="#f6d32d"/><rect x="8.5" y="18" width="4" height="4" rx="0.6" fill="#f6d32d"/><rect x="-11.8" y="9.7" width="3.6" height="3.6" rx="0.6" fill="#f6d32d" transform="rotate(45 -10 11.5)"/><rect x="5.2" y="9.7" width="3.6" height="3.6" rx="0.6" fill="#f6d32d" transform="rotate(45 7 11.5)"/><rect x="-11.8" y="26.7" width="3.6" height="3.6" rx="0.6" fill="#f6d32d" transform="rotate(45 -10 28.5)"/><circle cx="-2.00" cy="32.50" r="3.50" fill="#fcfcfc" stroke="#fcfcfc" stroke-width="3"/><circle cx="3.50" cy="29.50" r="5.50" fill="#fcfcfc" stroke="#fcfcfc" stroke-width="3"/><circle cx="10.00" cy="31.00" r="4.00" fill="#fcfcfc" stroke="#fcfcfc" stroke-width="3"/><circle cx="13.50" cy="33.00" r="3.00" fill="#fcfcfc" stroke="#fcfcfc" stroke-width="3"/><rect x="-2.00" y="32.00" width="15.50" height="4.00" rx="0" fill="#fcfcfc" stroke="#fcfcfc" stroke-width="3"/><circle cx="-2.00" cy="32.50" r="3.50" fill="#deddda"/><circle cx="3.50" cy="29.50" r="5.50" fill="#deddda"/><circle cx="10.00" cy="31.00" r="4.00" fill="#deddda"/><circle cx="13.50" cy="33.00" r="3.00" fill="#deddda"/><rect x="-2.00" y="32.00" width="15.50" height="4.00" rx="0" fill="#deddda"/></svg></div><div class="hi" style="left:0px;top:167px;">22°</div><div class="lo" style="left:0px;top:198px;">10°</div><div class="dot" style="left:49px;top:241px;"></div><div class="dot" style="left:49px;top:245px;"></div><div class="dot" style="left:49px;top:249px;"></div><div class="sep" style="left:100px;"></div><div class="day" style="left:101px;top:22px;">Sat</div><div class="date" style="left:101px;top:46px;">Jun 11</div><div class="icw" style="left:0;top:74px;"><svg class="ic" style="left:120px;top:0" width="60" height="60" viewBox="-30.5 0 60 60"><circle cx="-1.6" cy="19.85" r="8" fill="#f6d32d"/><rect x="-3.5" y="6" width="4" height="4" rx="0.6" fill="#f6d32d"/><rect x="-15.5" y="18" width="4" height="4" rx="0.6" fill="#f6d32d"/><rect x="8.5" y="18" width="4" height="4" rx="0.6" fill="#f6d32d"/><rect x="-11.8" y="9.7" width="3.6" height="3.6" rx="0.6" fill="#f6d32d" transform="rotate(45 -10 11.5)"/><rect x="5.2" y="9.7" width="3.6" height="3.6" rx="0.6" fill="#f6d32d" transform="rotate(45 7 11.5)"/><rect x="-11.8" y="26.7" width="3.6" height="3.6" rx="0.6" fill="#f6d32d" transform="rotate(45 -10 28.5)"/><circle cx="-2.00" cy="32.50" r="3.50" fill="#fcfcfc" stroke="#fcfcfc" stroke-width="3"/><circle cx="3.50" cy="29.50" r="5.50" fill="#fcfcfc" stroke="#fcfcfc" stroke-width="3"/><circle cx="10.00" cy="31.00" r="4.00" fill="#fcfcfc" stroke="#fcfcfc" stroke-width="3"/><circle cx="13.50" cy="33.00" r="3.00" fill="#fcfcfc" stroke="#fcfcfc" stroke-width="3"/><rect x="-2.00" y="32.00" width="15.50" height="4.00" rx="0" fill="#fcfcfc" stroke="#fcfcfc" stroke-width="3"/><circle cx="-2.00" cy="32.50" r="3.50" fill="#deddda"/><circle cx="3.50" cy="29.50" r="5.50" fill="#deddda"/><circle cx="10.00" cy="31.00" r="4.00" fill="#deddda"/><circle cx="13.50" cy="33.00" r="3.00" fill="#deddda"/><rect x="-2.00" y="32.00" width="15.50" height="4.00" rx="0" fill="#deddda"/></svg></div><div class="hi" style="left:101px;top:167px;">25°</div><div class="lo" style="left:101px;top:198px;">10°</div><div class="dot" style="left:150px;top:241px;"></div><div class="dot" style="left:150px;top:245px;"></div><div class="dot" style="left:150px;top:249px;"></div><div class="sep" style="left:201px;"></div><div class="day" style="left:202px;top:22px;">Sun</div><div class="date" style="left:202px;top:46px;">Jun 12</div><div class="icw" style="left:0;top:74px;"><svg class="ic" style="left:221px;top:0" width="60" height="60" viewBox="-30.5 0 60 60"><circle cx="-1.6" cy="19.85" r="8" fill="#f6d32d"/><rect x="-3.5" y="6" width="4" height="4" rx="0.6" fill="#f6d32d"/><rect x="-15.5" y="18" width="4" height="4" rx="0.6" fill="#f6d32d"/><rect x="8.5" y="18" width="4" height="4" rx="0.6" fill="#f6d32d"/><rect x="-11.8" y="9.7" width="3.6" height="3.6" rx="0.6" fill="#f6d32d" transform="rotate(45 -10 11.5)"/><rect x="5.2" y="9.7" width="3.6" height="3.6" rx="0.6" fill="#f6d32d" transform="rotate(45 7 11.5)"/><rect x="-11.8" y="26.7" width="3.6" height="3.6" rx="0.6" fill="#f6d32d" transform="rotate(45 -10 28.5)"/><circle cx="-2.00" cy="32.50" r="3.50" fill="#fcfcfc" stroke="#fcfcfc" stroke-width="3"/><circle cx="3.50" cy="29.50" r="5.50" fill="#fcfcfc" stroke="#fcfcfc" stroke-width="3"/><circle cx="10.00" cy="31.00" r="4.00" fill="#fcfcfc" stroke="#fcfcfc" stroke-width="3"/><circle cx="13.50" cy="33.00" r="3.00" fill="#fcfcfc" stroke="#fcfcfc" stroke-width="3"/><rect x="-2.00" y="32.00" width="15.50" height="4.00" rx="0" fill="#fcfcfc" stroke="#fcfcfc" stroke-width="3"/><circle cx="-2.00" cy="32.50" r="3.50" fill="#deddda"/><circle cx="3.50" cy="29.50" r="5.50" fill="#deddda"/><circle cx="10.00" cy="31.00" r="4.00" fill="#deddda"/><circle cx="13.50" cy="33.00" r="3.00" fill="#deddda"/><rect x="-2.00" y="32.00" width="15.50" height="4.00" rx="0" fill="#deddda"/></svg></div><div class="hi" style="left:202px;top:167px;">26°</div><div class="lo" style="left:202px;top:198px;">11°</div><div class="dot" style="left:251px;top:241px;"></div><div class="dot" style="left:251px;top:245px;"></div><div class="dot" style="left:251px;top:249px;"></div><div class="sep" style="left:302px;"></div><div class="day" style="left:303px;top:22px;">Mon</div><div class="date" style="left:303px;top:46px;">Jun 13</div><div class="icw" style="left:0;top:74px;"><svg class="ic" style="left:322px;top:0" width="60" height="60" viewBox="-30.5 0 60 60"><circle cx="0.5" cy="19.8" r="8" fill="#f6d32d"/><rect x="-1.5" y="3.9" width="4" height="6.1" rx="0.8" fill="#f6d32d" transform="rotate(0 0.5 19.8)"/><rect x="-1.5" y="3.9" width="4" height="6.1" rx="0.8" fill="#f6d32d" transform="rotate(45 0.5 19.8)"/><rect x="-1.5" y="3.9" width="4" height="6.1" rx="0.8" fill="#f6d32d" transform="rotate(90 0.5 19.8)"/><rect x="-1.5" y="3.9" width="4" height="6.1" rx="0.8" fill="#f6d32d" transform="rotate(135 0.5 19.8)"/><rect x="-1.5" y="3.9" width="4" height="6.1" rx="0.8" fill="#f6d32d" transform="rotate(180 0.5 19.8)"/><rect x="-1.5" y="3.9" width="4" height="6.1" rx="0.8" fill="#f6d32d" transform="rotate(225 0.5 19.8)"/><rect x="-1.5" y="3.9" width="4" height="6.1" rx="0.8" fill="#f6d32d" transform="rotate(270 0.5 19.8)"/><rect x="-1.5" y="3.9" width="4" height="6.1" rx="0.8" fill="#f6d32d" transform="rotate(315 0.5 19.8)"/></svg></div><div class="hi" style="left:303px;top:167px;">22°</div><div class="lo" style="left:303px;top:198px;">15°</div><div class="dot" style="left:352px;top:241px;"></div><div class="dot" style="left:352px;top:245px;"></div><div class="dot" style="left:352px;top:249px;"></div><div class="sep" style="left:403px;"></div><div class="day" style="left:404px;top:22px;">Tue</div><div class="date" style="left:404px;top:46px;">Jun 14</div><div class="icw" style="left:0;top:74px;"><svg class="ic" style="left:423px;top:0" width="60" height="60" viewBox="-30.5 0 60 60"><circle cx="-11.80" cy="21.90" r="3.70" fill="#fcfcfc" stroke="#fcfcfc" stroke-width="3"/><circle cx="-4.20" cy="16.70" r="5.40" fill="#fcfcfc" stroke="#fcfcfc" stroke-width="3"/><circle cx="3.40" cy="12.60" r="4.90" fill="#fcfcfc" stroke="#fcfcfc" stroke-width="3"/><circle cx="8.40" cy="18.50" r="4.60" fill="#fcfcfc" stroke="#fcfcfc" stroke-width="3"/><circle cx="13.50" cy="23.00" r="3.00" fill="#fcfcfc" stroke="#fcfcfc" stroke-width="3"/><rect x="-11.80" y="20.00" width="25.30" height="6.00" rx="0" fill="#fcfcfc" stroke="#fcfcfc" stroke-width="3"/><rect x="-6.00" y="15.00" width="15.00" height="8.00" rx="0" fill="#fcfcfc" stroke="#fcfcfc" stroke-width="3"/><circle cx="-11.80" cy="21.90" r="3.70" fill="#deddda"/><circle cx="-4.20" cy="16.70" r="5.40" fill="#deddda"/><circle cx="3.40" cy="12.60" r="4.90" fill="#deddda"/><circle cx="8.40" cy="18.50" r="4.60" fill="#deddda"/><circle cx="13.50" cy="23.00" r="3.00" fill="#deddda"/><rect x="-11.80" y="20.00" width="25.30" height="6.00" rx="0" fill="#deddda"/><rect x="-6.00" y="15.00" width="15.00" height="8.00" rx="0" fill="#deddda"/><circle cx="-4.90" cy="30.90" r="3.00" fill="#fcfcfc" stroke="#fcfcfc" stroke-width="3"/><circle cx="1.40" cy="26.70" r="4.60" fill="#fcfcfc" stroke="#fcfcfc" stroke-width="3"/><circle cx="7.60" cy="28.10" r="3.80" fill="#fcfcfc" stroke="#fcfcfc" stroke-width="3"/><circle cx="11.70" cy="31.10" r="2.90" fill="#fcfcfc" stroke="#fcfcfc" stroke-width="3"/><rect x="-4.90" y="29.00" width="16.60" height="5.00" rx="0" fill="#fcfcfc" stroke="#fcfcfc" stroke-width="3"/><rect x="-1.00" y="27.00" width="10.00" height="4.00" rx="0" fill="#fcfcfc" stroke="#fcfcfc" stroke-width="3"/><circle cx="-4.90" cy="30.90" r="3.00" fill="#deddda"/><circle cx="1.40" cy="26.70" r="4.60" fill="#deddda"/><circle cx="7.60" cy="28.10" r="3.80" fill="#deddda"/><circle cx="11.70" cy="31.10" r="2.90" fill="#deddda"/><rect x="-4.90" y="29.00" width="16.60" height="5.00" rx="0" fill="#deddda"/><rect x="-1.00" y="27.00" width="10.00" height="4.00" rx="0" fill="#deddda"/></svg></div><div class="hi" style="left:404px;top:167px;">22°</div><div class="lo" style="left:404px;top:198px;">11°</div><div class="dot" style="left:453px;top:241px;"></div><div class="dot" style="left:453px;top:245px;"></div><div class="dot" style="left:453px;top:249px;"></div><div class="sep" style="left:504px;"></div><div class="day" style="left:505px;top:22px;">Wed</div><div class="date" style="left:505px;top:46px;">Jun 15</div><div class="icw" style="left:0;top:74px;"><svg class="ic" style="left:524px;top:0" width="60" height="60" viewBox="-30.5 0 60 60"><circle cx="-1.6" cy="19.85" r="8" fill="#f6d32d"/><rect x="-3.5" y="6" width="4" height="4" rx="0.6" fill="#f6d32d"/><rect x="-15.5" y="18" width="4" height="4" rx="0.6" fill="#f6d32d"/><rect x="8.5" y="18" width="4" height="4" rx="0.6" fill="#f6d32d"/><rect x="-11.8" y="9.7" width="3.6" height="3.6" rx="0.6" fill="#f6d32d" transform="rotate(45 -10 11.5)"/><rect x="5.2" y="9.7" width="3.6" height="3.6" rx="0.6" fill="#f6d32d" transform="rotate(45 7 11.5)"/><rect x="-11.8" y="26.7" width="3.6" height="3.6" rx="0.6" fill="#f6d32d" transform="rotate(45 -10 28.5)"/><circle cx="-2.00" cy="32.50" r="3.50" fill="#fcfcfc" stroke="#fcfcfc" stroke-width="3"/><circle cx="3.50" cy="29.50" r="5.50" fill="#fcfcfc" stroke="#fcfcfc" stroke-width="3"/><circle cx="10.00" cy="31.00" r="4.00" fill="#fcfcfc" stroke="#fcfcfc" stroke-width="3"/><circle cx="13.50" cy="33.00" r="3.00" fill="#fcfcfc" stroke="#fcfcfc" stroke-width="3"/><rect x="-2.00" y="32.00" width="15.50" height="4.00" rx="0" fill="#fcfcfc" stroke="#fcfcfc" stroke-width="3"/><circle cx="-2.00" cy="32.50" r="3.50" fill="#deddda"/><circle cx="3.50" cy="29.50" r="5.50" fill="#deddda"/><circle cx="10.00" cy="31.00" r="4.00" fill="#deddda"/><circle cx="13.50" cy="33.00" r="3.00" fill="#deddda"/><rect x="-2.00" y="32.00" width="15.50" height="4.00" rx="0" fill="#deddda"/></svg></div><div class="hi" style="left:505px;top:167px;">24°</div><div class="lo" style="left:505px;top:198px;">11°</div><div class="dot" style="left:554px;top:241px;"></div><div class="dot" style="left:554px;top:245px;"></div><div class="dot" style="left:554px;top:249px;"></div><div class="sep" style="left:605px;"></div><div class="day" style="left:606px;top:22px;">Thu</div><div class="date" style="left:606px;top:46px;">Jun 16</div><div class="icw" style="left:0;top:74px;"><svg class="ic" style="left:625px;top:0" width="60" height="60" viewBox="-30.5 0 60 60"><circle cx="-11.80" cy="17.90" r="3.70" fill="#9a9996"/><circle cx="-4.20" cy="12.70" r="5.40" fill="#9a9996"/><circle cx="3.40" cy="8.60" r="4.90" fill="#9a9996"/><circle cx="8.40" cy="14.50" r="4.60" fill="#9a9996"/><circle cx="13.50" cy="19.00" r="3.00" fill="#9a9996"/><rect x="-11.80" y="16.00" width="25.30" height="6.00" rx="0" fill="#9a9996"/><rect x="-6.00" y="11.00" width="15.00" height="8.00" rx="0" fill="#9a9996"/><line x1="-10.5" y1="25" x2="-12.5" y2="34.5" stroke="#2a7de1" stroke-width="1.7" stroke-linecap="round"/><line x1="-6.5" y1="25" x2="-8.5" y2="34.5" stroke="#2a7de1" stroke-width="1.7" stroke-linecap="round"/><line x1="-2.5" y1="25" x2="-4.5" y2="34.5" stroke="#2a7de1" stroke-width="1.7" stroke-linecap="round"/><line x1="1.5" y1="25" x2="-0.5" y2="34.5" stroke="#2a7de1" stroke-width="1.7" stroke-linecap="round"/><line x1="5.5" y1="25" x2="3.5" y2="34.5" stroke="#2a7de1" stroke-width="1.7" stroke-linecap="round"/><line x1="9.5" y1="25" x2="7.5" y2="34.5" stroke="#2a7de1" stroke-width="1.7" stroke-linecap="round"/></svg></div><div class="hi" style="left:606px;top:167px;">20°</div><div class="lo" style="left:606px;top:198px;">16°</div><div class="dot" style="left:655px;top:241px;"></div><div class="dot" style="left:655px;top:245px;"></div><div class="dot" style="left:655px;top:249px;"></div><div class="sep" style="left:706px;"></div>
    <svg class="abs" style="left:637px;top:110px" width="58" height="58" viewBox="0 0 58 58">
      <circle cx="28" cy="28.5" r="26.5" fill="#eff0f1" stroke="#bfc0c2" stroke-width="1.2"/>
      <path d="M25 22.5 L31 28.5 L25 34.5" fill="none" stroke="#232629" stroke-width="1.25"/>
    </svg>
  </div>
  <div class="t" style="left:31px;top:483px;font-size:12.5px;color:#232629;">Updated just now.</div>
  <div class="t" style="left:31px;top:508px;font-size:12.7px;color:#9a9a9a;">Weather data from the <span style="color:#2980b9;text-decoration:underline;">Norwegian Meteorological Institute</span>.</div>
</div>
</body></html>
